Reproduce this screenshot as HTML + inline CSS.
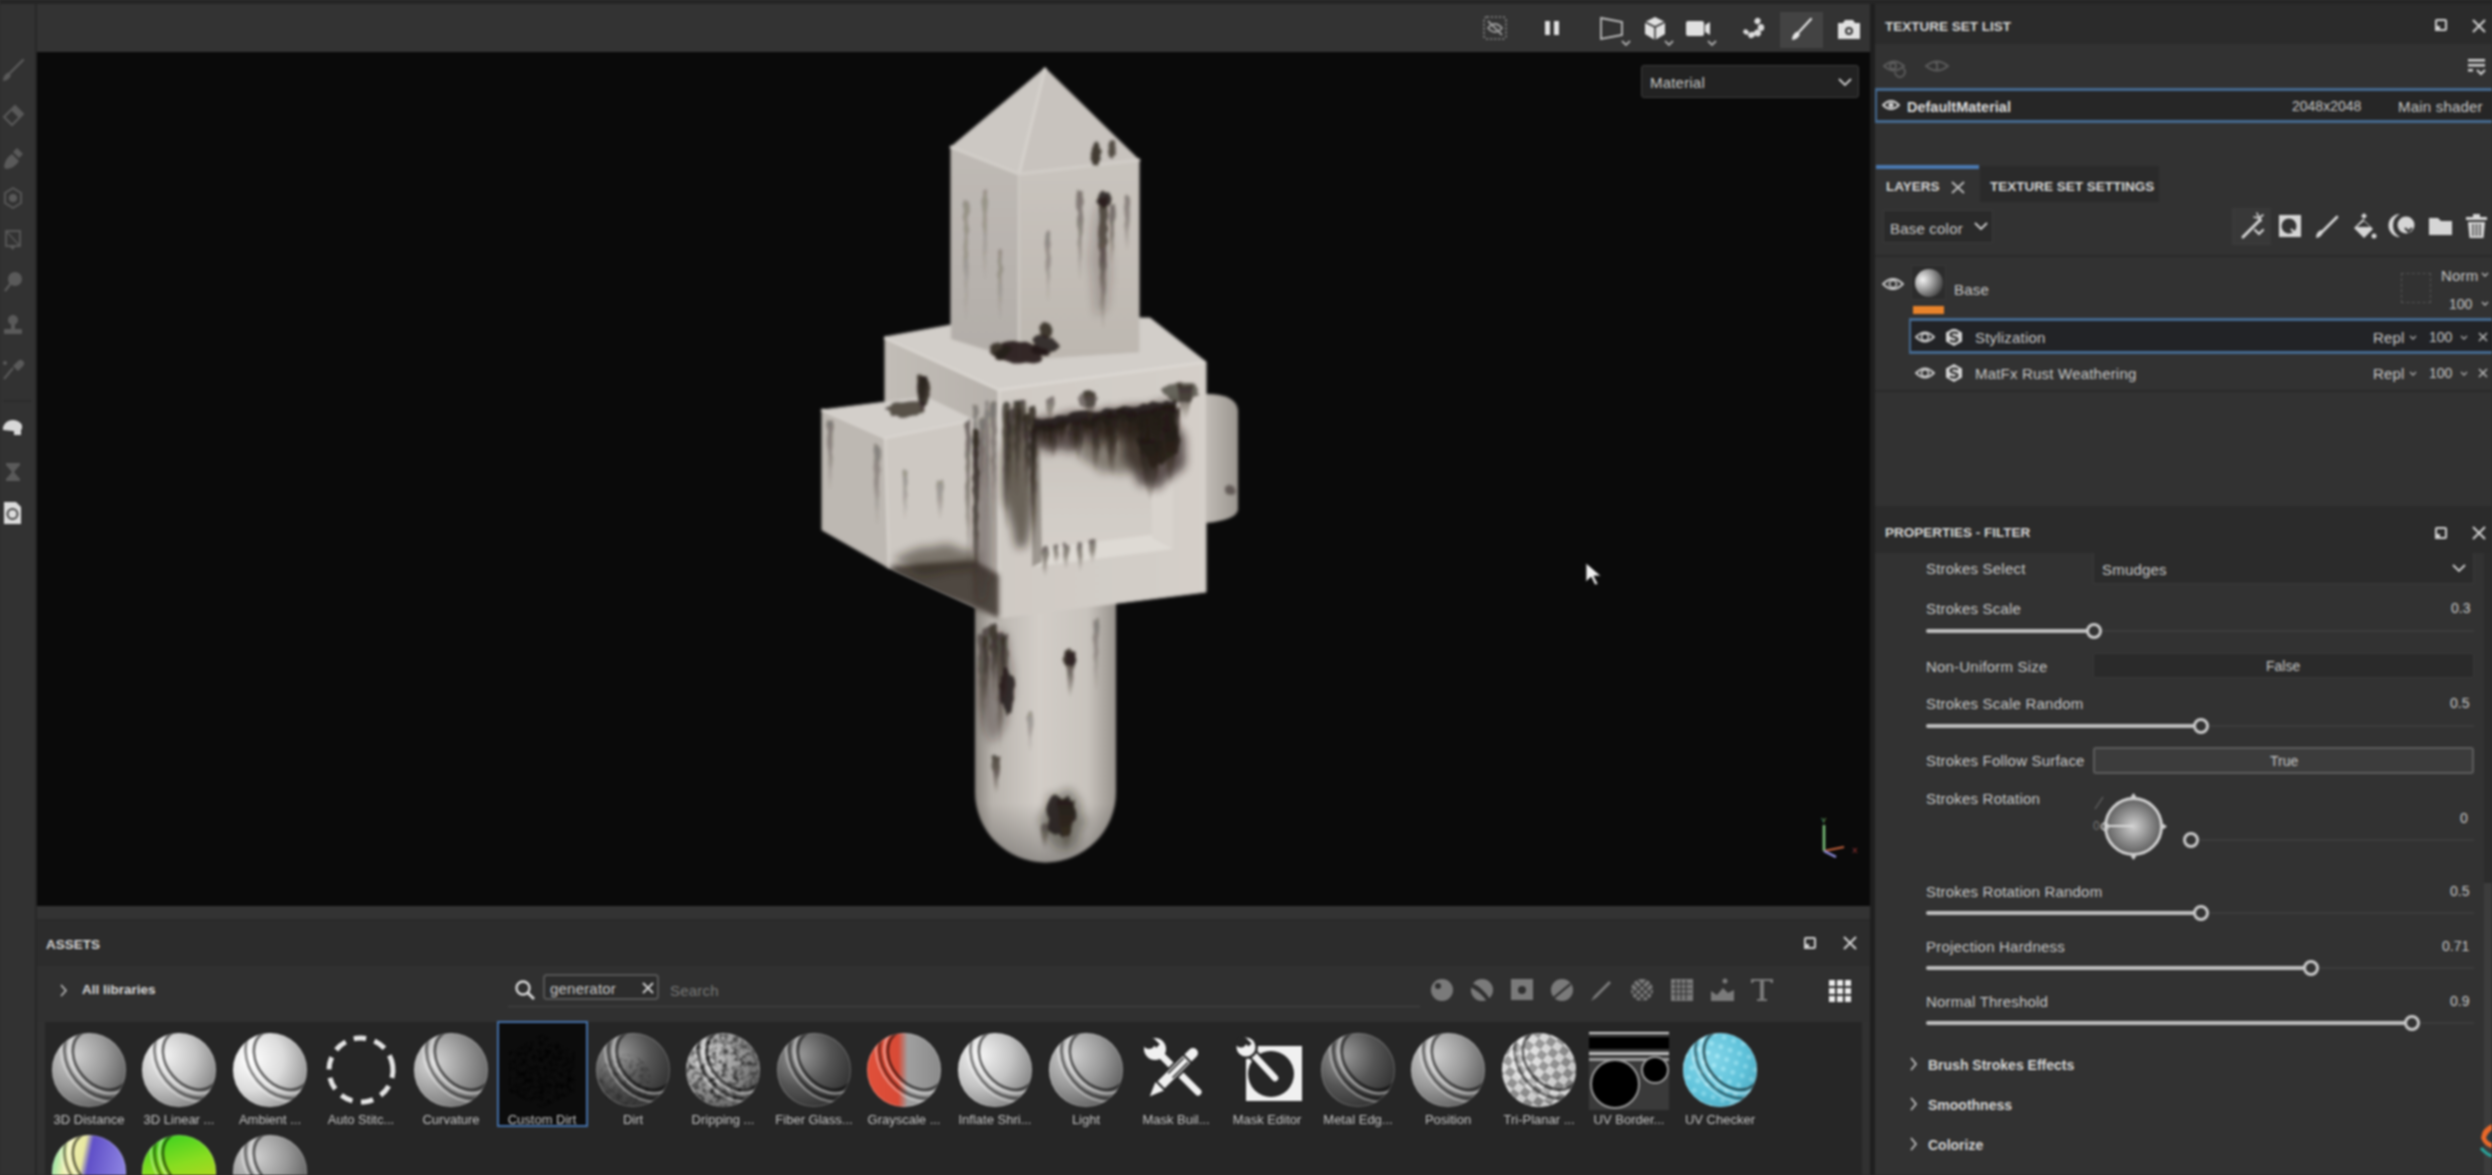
<!DOCTYPE html>
<html><head><meta charset="utf-8">
<style>
*{margin:0;padding:0;box-sizing:border-box}
html,body{width:2492px;height:1175px;overflow:hidden;background:#2e2e2e;font-family:"Liberation Sans",sans-serif;color:#d0d0d0}
.a{position:absolute}
.t{position:absolute;white-space:nowrap;line-height:1}
#topstrip{left:0;top:0;width:2492px;height:4px;background:#252525}
#lefttb{left:0;top:4px;width:35px;height:1171px;background:#323232}
#leftsep{left:35px;top:4px;width:2px;height:1171px;background:#272727}
#vptb{left:37px;top:4px;width:1833px;height:48px;background:#333333}
#vp{left:37px;top:52px;width:1833px;height:854px;background:#0a0a0a;overflow:hidden}
#midsep{left:1870px;top:4px;width:5px;height:1171px;background:#1f1f1f}
#rp{left:1875px;top:4px;width:617px;height:1171px;background:#323232}
#assets{left:37px;top:906px;width:1833px;height:269px;background:#313131}
.hdr{font-weight:bold;font-size:13.5px;color:#d6d6d6}
.lbl{font-size:15px;letter-spacing:0.2px;color:#c8c8c8}
.val{font-size:14px;color:#c8c8c8}
.trk{position:absolute;height:2px;background:#3c3c3c}
.fil{position:absolute;height:4px;background:#bdbdbd;border-radius:2px}
.knob{position:absolute;width:16px;height:16px;border:3px solid #c8c8c8;border-radius:50%;background:#333}
</style></head><body><div id="wrap" style="position:absolute;left:0;top:0;width:2492px;height:1175px;filter:blur(1px)">
<div class="a" id="topstrip"></div>
<div class="a" id="lefttb"></div>
<div class="a" id="leftsep"></div>
<div class="a" id="vptb"></div>
<div class="a" id="vp"></div>
<div class="a" id="assets"></div>
<div class="a" id="midsep"></div>
<div class="a" id="rp"></div>



<!-- 3D OBJECT -->
<svg class="a" style="left:0;top:0" width="1870" height="906">
<defs>
 <filter id="bl1" x="-20%" y="-20%" width="140%" height="140%"><feGaussianBlur stdDeviation="1"/></filter>
 <filter id="bl2" x="-50%" y="-50%" width="200%" height="200%"><feGaussianBlur stdDeviation="2.5"/></filter>
 <filter id="bl3" x="-50%" y="-50%" width="200%" height="200%"><feGaussianBlur stdDeviation="4"/></filter>
 <filter id="rust" x="-30%" y="-30%" width="160%" height="160%">
  <feTurbulence type="fractalNoise" baseFrequency="0.3 0.1" numOctaves="2" seed="4" result="n"/>
  <feDisplacementMap in="SourceGraphic" in2="n" scale="9" xChannelSelector="R" yChannelSelector="G" result="d"/>
  <feGaussianBlur in="d" stdDeviation="1.3"/>
 </filter>
 <filter id="rustb" x="-30%" y="-30%" width="160%" height="160%">
  <feTurbulence type="fractalNoise" baseFrequency="0.2 0.05" numOctaves="2" seed="11" result="n"/>
  <feDisplacementMap in="SourceGraphic" in2="n" scale="12" xChannelSelector="R" yChannelSelector="G" result="d"/>
  <feGaussianBlur in="d" stdDeviation="3.5"/>
 </filter>
 <linearGradient id="drip" x1="0" y1="0" x2="0" y2="1"><stop offset="0" stop-color="#1e1711" stop-opacity="1"/><stop offset="0.5" stop-color="#2e251d" stop-opacity="0.8"/><stop offset="1" stop-color="#4a3d31" stop-opacity="0.05"/></linearGradient>
 <linearGradient id="pl" x1="0" y1="0" x2="0" y2="1"><stop offset="0" stop-color="#bfbab5"/><stop offset="1" stop-color="#b2ada8"/></linearGradient>
 <linearGradient id="pr" x1="0" y1="0" x2="0" y2="1"><stop offset="0" stop-color="#c9c4be"/><stop offset="1" stop-color="#bdb7b0"/></linearGradient>
 <linearGradient id="cyl" x1="0" y1="0" x2="1" y2="0"><stop offset="0" stop-color="#8a857f"/><stop offset="0.12" stop-color="#b8b3ad"/><stop offset="0.45" stop-color="#d2cdc7"/><stop offset="0.8" stop-color="#c8c3bd"/><stop offset="1" stop-color="#96918b"/></linearGradient>
 <linearGradient id="cylb" x1="0" y1="0" x2="0" y2="1"><stop offset="0" stop-color="#000" stop-opacity="0"/><stop offset="0.78" stop-color="#000" stop-opacity="0"/><stop offset="1" stop-color="#000" stop-opacity="0.3"/></linearGradient>
 <linearGradient id="cfr" x1="0" y1="0" x2="1" y2="0"><stop offset="0" stop-color="#cfcac4"/><stop offset="1" stop-color="#d4cfc9"/></linearGradient>
 <linearGradient id="cfl" x1="0" y1="0" x2="1" y2="0"><stop offset="0" stop-color="#c2bdb7"/><stop offset="1" stop-color="#b6b1ab"/></linearGradient>
 <linearGradient id="rec" x1="0" y1="0" x2="0" y2="1"><stop offset="0" stop-color="#c4beb7"/><stop offset="0.6" stop-color="#d0cbc5"/><stop offset="1" stop-color="#d6d1cb"/></linearGradient>
 <linearGradient id="rcyl" x1="0" y1="0" x2="1" y2="0"><stop offset="0" stop-color="#c0bbb5"/><stop offset="1" stop-color="#9a958f"/></linearGradient>
 <clipPath id="objclip">
  <path d="M975 592 V792 A70.5 70.5 0 0 0 1116 792 V592 Z"/>
  <path d="M885 337 L990 318 L1150 318 L1206 362 L1206 592 L999 618 L885 566 Z"/>
  <path d="M1206 394 Q1236 394 1238 410 V510 Q1236 520 1206 523 Z"/>
  <path d="M822 410 L926 397 L974 420 L974 562 L889 568 L822 530 Z"/>
  <path d="M1045 68 L1139 160 L1139 352 L1019 360 L951 339 L951 147 Z"/>
 </clipPath>
</defs>
<g filter="url(#bl1)">
 <path d="M975 592 V792 A70.5 70.5 0 0 0 1116 792 V592 Z" fill="url(#cyl)"/>
 <path d="M975 592 V792 A70.5 70.5 0 0 0 1116 792 V592 Z" fill="url(#cylb)"/>
 <path d="M885 337 L999 390 L999 618 L885 566 Z" fill="url(#cfl)" stroke="#c0bbb5" stroke-width="1"/>
 <path d="M999 390 L1206 362 L1206 592 L999 618 Z" fill="url(#cfr)" stroke="#d0cbc5" stroke-width="1"/>
 <path d="M885 337 L990 318 L1150 318 L1206 362 L999 390 Z" fill="#d2cec9" stroke="#d2cec9" stroke-width="1"/>
 <path d="M999 390 L1206 362" stroke="#e0dcd7" stroke-width="2"/>
 <path d="M1032 417 L1173 398 L1173 549 L1032 567 Z" fill="url(#rec)"/>
 <path d="M1032 567 L1173 549 L1173 532 L1048 548 Z" fill="#dedad4"/>
 <path d="M1150 402 L1173 398 L1173 549 L1152 538 Z" fill="#d8d3cd"/>
 <path d="M1032 417 L1040 416 L1042 562 L1032 567 Z" fill="#9c968f"/>
 <path d="M1206 394 Q1236 394 1238 410 V510 Q1236 520 1206 523 Z" fill="url(#rcyl)"/>
 <path d="M822 410 L926 397 L974 420 L885 438 Z" fill="#d3cfca" stroke="#d3cfca" stroke-width="1"/>
 <path d="M822 410 L885 438 L889 568 L822 530 Z" fill="#bdb8b2" stroke="#bdb8b2" stroke-width="1"/>
 <path d="M885 438 L974 420 L974 562 L889 568 Z" fill="#cdc8c2" stroke="#cdc8c2" stroke-width="1"/>
 <path d="M951 147 L1019 174 L1019 360 L951 339 Z" fill="url(#pl)" stroke="#c4bfb9" stroke-width="1"/>
 <path d="M1019 174 L1139 160 L1139 352 L1019 360 Z" fill="url(#pr)" stroke="#c2bdb7" stroke-width="1"/>
 <path d="M1045 68 L951 147 L1019 174 Z" fill="#ccc8c3" stroke="#ccc8c3" stroke-width="1"/>
 <path d="M1045 68 L1019 174 L1139 160 Z" fill="#c8c3be" stroke="#c8c3be" stroke-width="1"/>
</g>
<g stroke-linecap="round" fill="none" filter="url(#bl1)">
 <path d="M1045 69L1019 174" stroke="#d9d5d0" stroke-width="2.5"/>
 <path d="M951 147L1019 174L1139 160" stroke="#d4d0cb" stroke-width="2.5"/>
 <path d="M1019 174V359" stroke="#cdc9c4" stroke-width="2"/>
 <path d="M999 391V616" stroke="#dad6d0" stroke-width="2.5"/>
 <path d="M885 338L999 390" stroke="#dedad5" stroke-width="2"/>
 <path d="M885 438L889 567" stroke="#d8d4ce" stroke-width="2"/>
 <path d="M822 410L885 438L974 420" stroke="#dcd8d3" stroke-width="2"/>
</g>
<g clip-path="url(#objclip)">
 <path d="M889 566 L974 560 L999 575 L999 618 L960 602 L905 585Z" fill="#3e362e" opacity="0.85" filter="url(#bl2)"/>
 <g filter="url(#bl3)">
<path d="M1034.0 419.8 L1038.7 420.4 L1043.5 415.8 L1048.2 416.7 L1052.9 418.6 L1057.7 417.2 L1062.4 414.1 L1067.1 413.5 L1071.9 412.3 L1076.6 411.7 L1081.3 412.7 L1086.1 415.1 L1090.8 409.8 L1095.5 411.8 L1100.3 414.1 L1105.0 408.2 L1109.7 407.7 L1114.5 410.0 L1119.2 409.8 L1123.9 406.0 L1128.7 406.7 L1133.4 407.3 L1138.1 405.4 L1142.9 406.8 L1147.6 407.7 L1152.3 403.3 L1157.1 404.7 L1161.8 400.6 L1166.5 401.4 L1171.3 403.5 L1176.0 398.2 L1176.0 437.3 L1171.3 433.1 L1166.5 433.9 L1161.8 430.4 L1157.1 437.6 L1152.3 433.6 L1147.6 438.8 L1142.9 443.9 L1138.1 430.5 L1133.4 437.9 L1128.7 437.6 L1123.9 444.2 L1119.2 433.4 L1114.5 435.7 L1109.7 438.6 L1105.0 440.8 L1100.3 449.3 L1095.5 437.1 L1090.8 450.1 L1086.1 437.3 L1081.3 443.7 L1076.6 448.6 L1071.9 451.2 L1067.1 453.2 L1062.4 446.8 L1057.7 450.8 L1052.9 450.5 L1048.2 454.3 L1043.5 448.4 L1038.7 445.5 L1034.0 453.9Z" fill="#2a2019" opacity="0.7"/>
<path d="M1164.1 450.0 L1163.7 455.5 L1157.1 459.9 L1152.9 464.6 L1146.2 468.3 L1140.5 473.6 L1129.1 472.1 L1120.0 474.2 L1111.1 471.6 L1100.4 472.6 L1095.8 466.9 L1089.6 463.5 L1084.1 459.6 L1076.8 455.5 L1081.4 450.0 L1079.8 444.9 L1084.7 440.6 L1089.4 436.4 L1094.0 431.9 L1098.5 425.2 L1109.5 424.5 L1120.0 421.0 L1129.8 426.1 L1141.8 424.8 L1148.6 430.1 L1152.2 435.7 L1161.9 438.8 L1170.0 443.7Z" fill="#2a2019" opacity="0.45"/>
<path d="M974.1 560.0 L973.4 562.7 L976.4 566.1 L969.9 568.4 L962.5 569.9 L953.9 570.1 L946.8 570.4 L940.0 572.8 L930.2 575.1 L919.1 575.2 L912.5 572.1 L911.6 567.9 L907.5 565.5 L899.6 563.2 L895.3 560.0 L897.1 556.6 L905.1 554.1 L909.0 551.3 L915.3 549.2 L922.1 547.0 L931.6 547.1 L940.0 544.5 L950.4 544.0 L957.1 547.6 L963.2 549.8 L973.7 550.6 L975.0 554.1 L983.6 556.5Z" fill="#2a2019" opacity="0.5"/>
<path d="M1185.1 450.0 L1186.0 459.0 L1184.5 468.0 L1177.5 472.7 L1172.1 477.2 L1166.5 480.3 L1161.7 486.9 L1155.0 490.2 L1148.9 484.0 L1141.0 486.8 L1136.0 480.1 L1133.2 472.0 L1129.5 465.6 L1122.3 459.4 L1122.7 450.0 L1123.5 440.9 L1123.5 430.8 L1126.4 421.1 L1132.8 414.7 L1141.1 413.4 L1147.9 410.7 L1155.0 406.3 L1162.8 406.9 L1169.4 412.2 L1173.8 420.1 L1177.6 427.2 L1183.5 432.6 L1185.6 441.2Z" fill="#2a2019" opacity="0.7"/>
<path d="M1030.8 470.0 L1032.5 485.4 L1033.1 503.9 L1031.5 520.1 L1029.2 535.3 L1025.9 546.9 L1021.7 546.5 L1018.0 550.3 L1014.5 540.8 L1012.2 526.6 L1009.5 519.5 L1007.5 509.1 L1003.4 502.7 L1002.0 487.1 L1002.1 470.0 L1002.4 453.4 L1005.6 442.0 L1006.6 427.6 L1008.2 412.8 L1011.6 407.5 L1014.9 407.3 L1018.0 404.8 L1021.0 407.7 L1024.6 406.2 L1026.4 420.8 L1027.7 433.9 L1029.6 444.0 L1032.4 454.6Z" fill="#2a2019" opacity="0.6"/>
<path d="M992.8 520.0 L992.6 541.8 L992.6 565.8 L990.2 578.7 L987.5 582.1 L986.1 596.0 L984.1 603.5 L982.0 599.2 L979.8 606.9 L977.9 596.8 L976.4 583.0 L975.0 570.3 L972.3 562.2 L973.3 537.9 L973.0 520.0 L973.4 502.3 L974.3 486.7 L974.9 469.1 L976.6 458.8 L977.4 434.0 L979.7 429.6 L982.0 423.3 L984.1 437.9 L986.2 442.4 L988.3 448.9 L990.7 457.8 L990.8 481.8 L991.5 500.4Z" fill="#2a2019" opacity="0.3"/>
<path d="M1012.7 680.0 L1013.0 694.1 L1009.3 703.7 L1007.6 714.6 L1005.8 726.6 L1002.0 730.0 L998.8 736.7 L995.0 739.3 L990.8 743.3 L987.3 734.8 L984.0 727.6 L982.4 714.6 L979.5 705.6 L979.7 692.0 L979.1 680.0 L980.1 668.3 L981.7 658.1 L984.4 650.8 L986.6 643.8 L988.5 633.7 L991.8 632.1 L995.0 635.4 L998.5 626.6 L1001.5 633.7 L1006.0 632.8 L1008.5 643.0 L1009.5 656.0 L1012.4 666.4Z" fill="#2a2019" opacity="0.35"/>
<path d="M1086.6 820.0 L1083.6 826.3 L1079.7 830.8 L1079.0 837.2 L1077.0 844.0 L1072.3 847.3 L1067.5 850.7 L1062.0 849.0 L1056.8 848.8 L1052.9 844.1 L1049.0 840.8 L1045.9 836.4 L1043.5 831.4 L1041.9 825.8 L1038.7 820.0 L1042.0 814.2 L1044.6 809.3 L1047.1 804.9 L1047.3 796.5 L1052.0 793.7 L1057.7 795.8 L1062.0 790.8 L1067.6 789.0 L1073.1 790.6 L1076.3 797.2 L1080.7 801.0 L1081.6 808.0 L1081.0 814.5Z" fill="#2a2019" opacity="0.4"/>
<path d="M1111.1 265.0 L1111.3 280.4 L1108.9 290.8 L1108.7 306.5 L1105.7 307.8 L1103.9 313.6 L1101.8 312.0 L1100.0 313.2 L1098.2 311.8 L1095.8 317.2 L1094.3 308.2 L1093.2 297.5 L1092.4 286.8 L1091.6 276.5 L1089.6 265.0 L1089.7 251.0 L1091.8 241.4 L1092.1 227.3 L1093.7 217.4 L1095.7 211.4 L1097.8 206.2 L1100.0 202.1 L1102.5 199.8 L1104.6 207.8 L1106.7 214.8 L1108.0 226.6 L1109.5 237.6 L1109.7 251.7Z" fill="#3a2e24" opacity="0.2"/>
 </g>
 <g filter="url(#bl1)">
<path d="M1034.0 418.7 L1038.7 419.2 L1043.5 419.4 L1048.2 418.5 L1052.9 418.3 L1057.7 415.5 L1062.4 415.6 L1067.1 415.9 L1071.9 412.2 L1076.6 411.6 L1081.3 410.7 L1086.1 410.5 L1090.8 411.9 L1095.5 412.6 L1100.3 411.9 L1105.0 408.4 L1109.7 408.8 L1114.5 409.3 L1119.2 407.8 L1123.9 405.9 L1128.7 406.8 L1133.4 407.6 L1138.1 406.8 L1142.9 403.6 L1147.6 404.2 L1152.3 401.2 L1157.1 402.5 L1161.8 403.2 L1166.5 400.6 L1171.3 402.1 L1176.0 399.9 L1176.0 409.9 L1171.3 418.5 L1166.5 413.1 L1161.8 417.5 L1157.1 417.8 L1152.3 413.5 L1147.6 418.5 L1142.9 421.7 L1138.1 416.7 L1133.4 421.4 L1128.7 423.9 L1123.9 415.8 L1119.2 418.8 L1114.5 420.5 L1109.7 418.9 L1105.0 426.8 L1100.3 418.4 L1095.5 426.2 L1090.8 429.1 L1086.1 426.9 L1081.3 423.2 L1076.6 421.9 L1071.9 423.0 L1067.1 423.9 L1062.4 430.7 L1057.7 427.9 L1052.9 431.3 L1048.2 432.0 L1043.5 430.6 L1038.7 429.2 L1034.0 432.2Z" fill="#221a14" opacity="0.85"/>
<path d="M1032.6 426.3 L1035.2 424.4 L1037.8 426.0 L1040.4 427.7 L1040.9 432.3 L1039.1 438.8 L1038.5 445.3 L1036.9 451.7 L1036.0 450.7 L1034.6 444.3 L1032.9 437.8 L1032.8 431.3Z" fill="url(#drip)" opacity="0.7156042909618883"/>
<path d="M1038.1 427.3 L1041.0 424.7 L1043.8 425.3 L1046.6 425.2 L1045.7 431.9 L1045.4 438.5 L1044.2 445.1 L1042.9 451.7 L1041.7 450.7 L1040.0 444.1 L1040.0 437.5 L1037.8 430.9Z" fill="url(#drip)" opacity="0.7064533574285852"/>
<path d="M1042.3 423.4 L1045.6 425.8 L1049.0 423.6 L1052.4 424.1 L1052.8 431.9 L1051.9 438.6 L1050.1 445.3 L1047.7 452.1 L1046.7 451.1 L1044.6 444.3 L1044.2 437.6 L1041.9 430.9Z" fill="url(#drip)" opacity="0.7942626145572826"/>
<path d="M1047.4 426.1 L1051.0 424.1 L1054.6 426.0 L1058.1 423.9 L1057.9 431.1 L1056.8 437.9 L1056.5 444.8 L1055.4 451.6 L1053.2 458.4 L1052.2 457.4 L1050.7 450.6 L1049.4 443.8 L1048.8 436.9 L1047.9 430.1Z" fill="url(#drip)" opacity="0.7436530323553936"/>
<path d="M1057.8 422.7 L1059.8 421.1 L1061.9 423.4 L1064.0 423.1 L1063.2 427.6 L1064.0 433.6 L1062.5 439.7 L1061.3 445.7 L1060.1 444.7 L1059.0 438.7 L1057.5 432.6 L1056.6 426.6Z" fill="url(#drip)" opacity="0.8671011522480617"/>
<path d="M1061.0 420.2 L1063.3 420.7 L1065.6 421.1 L1068.0 422.5 L1067.1 425.7 L1066.7 430.6 L1066.8 435.5 L1065.3 440.5 L1064.1 439.5 L1062.6 434.5 L1061.5 429.6 L1060.3 424.7Z" fill="url(#drip)" opacity="0.8495704998486742"/>
<path d="M1067.5 422.4 L1070.6 423.9 L1073.6 420.7 L1076.7 422.7 L1079.8 421.0 L1080.4 428.6 L1079.2 434.9 L1077.7 441.2 L1076.2 447.5 L1074.0 453.8 L1073.0 452.8 L1070.9 446.5 L1069.6 440.2 L1067.9 433.9 L1068.8 427.6Z" fill="url(#drip)" opacity="0.6782164939514159"/>
<path d="M1071.5 420.6 L1074.8 421.8 L1078.1 419.9 L1081.4 422.0 L1084.7 418.5 L1085.3 427.1 L1083.7 433.8 L1083.0 440.6 L1082.4 447.3 L1080.3 454.0 L1078.6 460.7 L1077.7 459.7 L1075.9 453.0 L1074.5 446.3 L1073.9 439.6 L1072.9 432.8 L1072.7 426.1Z" fill="url(#drip)" opacity="0.76490445077337"/>
<path d="M1081.3 416.5 L1083.5 420.3 L1085.7 416.9 L1087.9 418.8 L1087.0 424.2 L1088.1 430.2 L1086.5 436.1 L1085.0 442.0 L1084.2 441.0 L1083.2 435.1 L1082.8 429.2 L1080.6 423.2Z" fill="url(#drip)" opacity="0.6369957487847367"/>
<path d="M1084.3 420.5 L1087.9 420.8 L1091.4 420.5 L1094.9 418.6 L1095.1 425.3 L1093.3 431.2 L1091.8 437.1 L1089.9 442.9 L1089.1 441.9 L1086.8 436.1 L1085.0 430.2 L1084.7 424.3Z" fill="url(#drip)" opacity="0.8103326849479464"/>
<path d="M1090.5 418.6 L1093.9 418.2 L1097.4 415.8 L1100.8 418.1 L1100.5 422.8 L1101.7 429.0 L1099.2 435.1 L1099.3 441.3 L1099.9 447.5 L1098.9 453.6 L1098.3 459.8 L1097.1 465.9 L1096.0 472.1 L1095.3 471.1 L1093.6 464.9 L1092.9 458.8 L1092.6 452.6 L1092.7 446.5 L1092.0 440.3 L1092.3 434.1 L1091.4 428.0 L1090.1 421.8Z" fill="url(#drip)" opacity="0.7589393771186163"/>
<path d="M1096.8 416.1 L1100.2 415.4 L1103.6 414.3 L1107.1 414.4 L1110.5 413.8 L1109.1 422.0 L1109.0 428.4 L1108.5 434.9 L1106.9 441.4 L1104.3 447.8 L1103.1 446.8 L1100.8 440.4 L1099.9 433.9 L1098.7 427.4 L1098.4 421.0Z" fill="url(#drip)" opacity="0.8643564402651348"/>
<path d="M1105.7 416.7 L1108.2 415.5 L1110.6 415.7 L1113.1 416.5 L1112.5 423.2 L1113.4 429.5 L1112.4 435.7 L1113.4 442.0 L1112.4 448.3 L1111.7 454.6 L1111.2 460.9 L1110.7 467.2 L1109.8 473.5 L1109.1 472.5 L1108.4 466.2 L1107.7 459.9 L1107.3 453.6 L1106.1 447.3 L1106.4 441.0 L1105.3 434.7 L1105.3 428.5 L1105.6 422.2Z" fill="url(#drip)" opacity="0.7414746494230962"/>
<path d="M1107.7 412.4 L1111.0 412.1 L1114.3 415.5 L1117.6 414.2 L1118.4 420.1 L1117.6 426.4 L1116.3 432.6 L1117.7 438.9 L1116.3 445.2 L1116.5 451.5 L1114.9 457.8 L1114.6 464.1 L1114.3 470.4 L1113.1 476.6 L1112.3 475.6 L1110.9 469.4 L1110.0 463.1 L1109.5 456.8 L1109.1 450.5 L1109.8 444.2 L1109.4 437.9 L1108.6 431.6 L1107.7 425.4 L1106.2 419.1Z" fill="url(#drip)" opacity="0.8669045116153069"/>
<path d="M1116.6 410.7 L1119.7 410.2 L1122.9 413.6 L1126.1 410.0 L1126.7 418.5 L1124.7 425.0 L1124.5 431.5 L1123.7 438.0 L1123.2 444.5 L1122.2 451.0 L1120.9 450.0 L1119.4 443.5 L1118.0 437.0 L1117.2 430.5 L1116.7 424.0 L1117.3 417.5Z" fill="url(#drip)" opacity="0.8587456685830712"/>
<path d="M1120.8 408.8 L1124.2 409.6 L1127.7 412.1 L1131.1 409.6 L1134.5 411.4 L1133.4 416.9 L1134.0 423.4 L1132.2 429.8 L1132.2 436.2 L1131.4 442.7 L1130.4 449.1 L1128.2 455.6 L1127.4 454.6 L1125.2 448.1 L1124.8 441.7 L1124.0 435.2 L1123.4 428.8 L1120.7 422.4 L1120.3 415.9Z" fill="url(#drip)" opacity="0.645281142236513"/>
<path d="M1126.7 413.0 L1129.7 413.3 L1132.8 413.0 L1135.8 413.9 L1138.9 416.7 L1139.2 421.9 L1138.8 428.8 L1137.9 435.8 L1136.0 442.7 L1135.3 449.6 L1133.5 456.5 L1132.3 455.5 L1130.0 448.6 L1129.9 441.7 L1127.8 434.8 L1127.5 427.8 L1127.3 420.9Z" fill="url(#drip)" opacity="0.7430884421032941"/>
<path d="M1134.8 412.0 L1137.6 415.3 L1140.4 413.0 L1143.2 413.4 L1142.8 420.1 L1143.4 426.4 L1141.8 432.7 L1141.3 439.0 L1140.8 445.3 L1140.3 451.5 L1139.7 457.8 L1138.7 456.8 L1136.8 450.5 L1136.6 444.3 L1135.8 438.0 L1135.2 431.7 L1134.7 425.4 L1133.6 419.1Z" fill="url(#drip)" opacity="0.8182814603361526"/>
<path d="M1140.2 410.7 L1142.5 411.7 L1144.9 411.0 L1147.2 410.7 L1146.6 416.3 L1146.0 422.9 L1146.9 429.4 L1145.6 435.9 L1144.4 442.5 L1142.9 441.5 L1142.3 434.9 L1141.3 428.4 L1139.8 421.9 L1139.3 415.3Z" fill="url(#drip)" opacity="0.8783985028736239"/>
<path d="M1148.5 410.2 L1150.8 410.7 L1153.0 409.4 L1155.2 409.5 L1155.3 417.6 L1154.6 424.5 L1153.7 431.3 L1153.2 438.1 L1152.4 444.9 L1151.0 443.9 L1149.7 437.1 L1149.5 430.3 L1148.0 423.5 L1149.0 416.6Z" fill="url(#drip)" opacity="0.8251232062869309"/>
<path d="M1153.4 410.3 L1155.9 408.9 L1158.3 412.1 L1160.7 408.8 L1162.5 416.7 L1161.4 422.8 L1161.8 428.8 L1159.5 434.9 L1161.0 441.0 L1160.8 447.0 L1160.1 453.1 L1159.5 459.2 L1159.2 465.2 L1158.7 471.3 L1158.6 477.4 L1157.7 483.4 L1156.5 482.4 L1155.8 476.4 L1155.6 470.3 L1155.2 464.2 L1155.4 458.2 L1154.9 452.1 L1153.9 446.0 L1154.4 440.0 L1153.1 433.9 L1153.4 427.8 L1153.3 421.8 L1153.7 415.7Z" fill="url(#drip)" opacity="0.7265436879415117"/>
<path d="M1154.8 407.1 L1158.5 408.4 L1162.1 406.5 L1165.8 405.7 L1166.0 413.2 L1164.8 419.6 L1164.1 425.9 L1163.0 432.3 L1162.6 438.7 L1160.8 445.1 L1160.0 444.1 L1158.1 437.7 L1157.4 431.3 L1157.1 424.9 L1156.6 418.6 L1153.6 412.2Z" fill="url(#drip)" opacity="0.6511474203163011"/>
<path d="M1163.6 406.2 L1166.6 405.6 L1169.7 405.1 L1172.8 405.8 L1175.9 405.1 L1176.5 411.4 L1176.2 417.4 L1174.2 423.5 L1175.3 429.5 L1174.9 435.6 L1174.8 441.6 L1173.7 447.7 L1173.2 453.8 L1172.2 459.8 L1171.8 465.9 L1171.7 471.9 L1170.0 478.0 L1169.4 477.0 L1167.7 470.9 L1167.2 464.9 L1166.9 458.8 L1165.6 452.8 L1165.7 446.7 L1165.9 440.6 L1164.7 434.6 L1163.8 428.5 L1163.0 422.5 L1164.9 416.4 L1162.2 410.4Z" fill="url(#drip)" opacity="0.6769446394435816"/>
<path d="M1169.4 406.7 L1172.9 406.8 L1176.4 409.5 L1179.9 406.7 L1179.9 413.9 L1179.3 420.0 L1179.4 426.1 L1178.8 432.2 L1177.8 438.3 L1176.7 444.3 L1175.3 450.4 L1173.8 449.4 L1172.8 443.3 L1171.8 437.3 L1171.6 431.2 L1170.3 425.1 L1169.1 419.0 L1169.1 412.9Z" fill="url(#drip)" opacity="0.8058110931336083"/>
<path d="M1180.3 440.0 L1178.6 446.6 L1177.6 453.2 L1171.9 455.5 L1168.6 458.5 L1165.3 461.2 L1162.1 465.0 L1158.0 463.1 L1153.2 469.2 L1149.5 464.6 L1147.9 457.8 L1145.3 454.2 L1141.6 451.0 L1138.6 446.2 L1135.9 440.0 L1140.3 434.3 L1137.8 426.4 L1139.5 419.3 L1144.3 416.0 L1148.5 412.2 L1153.6 413.2 L1158.0 415.7 L1161.4 419.2 L1167.0 413.7 L1172.4 414.6 L1174.6 421.5 L1177.2 427.1 L1178.0 433.6Z" fill="#221a14" opacity="0.8"/>
<path d="M1139.0 440.8 L1142.1 438.4 L1145.3 441.0 L1148.4 438.7 L1151.6 440.4 L1154.7 440.5 L1157.9 441.4 L1161.0 440.5 L1159.9 446.0 L1160.8 452.0 L1158.9 458.0 L1158.4 464.0 L1157.9 470.0 L1157.1 476.0 L1154.8 482.0 L1154.1 488.0 L1152.6 494.0 L1150.8 500.0 L1149.3 499.0 L1147.5 493.0 L1146.2 487.0 L1144.6 481.0 L1144.0 475.0 L1143.0 469.0 L1140.9 463.0 L1140.4 457.0 L1139.1 451.0 L1140.1 445.0Z" fill="url(#drip)" opacity="0.8"/>
<path d="M1163.0 429.6 L1166.5 429.2 L1170.0 430.9 L1173.5 431.9 L1177.0 428.6 L1177.6 436.1 L1175.8 442.2 L1176.5 448.3 L1175.7 454.4 L1175.0 460.6 L1174.0 466.7 L1172.6 472.8 L1172.4 478.9 L1170.4 485.0 L1169.4 484.0 L1168.3 477.9 L1166.7 471.8 L1166.1 465.7 L1165.7 459.6 L1165.0 453.4 L1163.7 447.3 L1163.3 441.2 L1164.0 435.1Z" fill="url(#drip)" opacity="0.75"/>
<path d="M1003.1 404.2 L1005.3 401.7 L1007.6 401.8 L1009.8 404.1 L1009.6 408.7 L1009.1 414.8 L1009.1 420.9 L1010.9 427.0 L1010.6 433.1 L1009.0 439.2 L1010.1 445.3 L1008.8 451.4 L1009.5 457.5 L1008.3 463.6 L1009.2 469.7 L1009.3 475.8 L1008.7 481.9 L1008.8 488.0 L1007.9 494.2 L1008.2 500.3 L1008.4 506.4 L1007.8 512.5 L1007.9 518.6 L1007.5 524.7 L1007.2 530.8 L1006.0 529.8 L1005.3 523.7 L1005.4 517.6 L1005.3 511.5 L1004.7 505.4 L1004.9 499.3 L1004.3 493.2 L1004.4 487.0 L1003.9 480.9 L1003.9 474.8 L1003.5 468.7 L1004.4 462.6 L1003.8 456.5 L1003.7 450.4 L1003.4 444.3 L1003.1 438.2 L1002.3 432.1 L1003.3 426.0 L1002.7 419.9 L1002.3 413.8 L1002.6 407.7Z" fill="url(#drip)" opacity="0.7105441962026477"/>
<path d="M1006.7 411.6 L1009.1 410.2 L1011.4 409.0 L1013.8 408.1 L1014.5 416.1 L1013.3 422.5 L1014.9 428.9 L1014.2 435.2 L1013.0 441.6 L1013.1 448.0 L1012.3 454.4 L1012.4 460.8 L1012.7 467.1 L1012.8 473.5 L1012.0 479.9 L1012.2 486.3 L1011.2 492.7 L1010.6 499.0 L1009.9 498.0 L1009.0 491.7 L1008.5 485.3 L1008.4 478.9 L1008.3 472.5 L1007.5 466.1 L1007.0 459.8 L1007.6 453.4 L1007.6 447.0 L1007.2 440.6 L1006.1 434.2 L1007.5 427.9 L1006.3 421.5 L1006.4 415.1Z" fill="url(#drip)" opacity="0.5565112002227539"/>
<path d="M1013.8 400.9 L1015.8 401.0 L1017.8 400.9 L1019.8 402.2 L1019.7 408.3 L1021.2 414.5 L1020.9 420.8 L1020.3 427.0 L1019.4 433.3 L1020.1 439.6 L1019.4 445.8 L1019.6 452.1 L1019.7 458.3 L1018.2 464.6 L1018.9 470.9 L1018.8 477.1 L1018.0 483.4 L1017.7 489.6 L1017.1 495.9 L1016.4 494.9 L1015.5 488.6 L1015.0 482.4 L1014.8 476.1 L1015.0 469.9 L1015.0 463.6 L1015.2 457.3 L1014.7 451.1 L1013.5 444.8 L1015.0 438.6 L1014.7 432.3 L1014.5 426.0 L1014.6 419.8 L1014.4 413.5 L1013.8 407.3Z" fill="url(#drip)" opacity="0.7234582195755985"/>
<path d="M1017.6 400.6 L1020.2 400.4 L1022.9 399.7 L1025.5 400.4 L1025.3 406.4 L1025.9 412.4 L1024.2 418.4 L1024.6 424.5 L1024.9 430.5 L1024.2 436.6 L1023.2 442.6 L1023.4 448.6 L1023.3 454.7 L1022.1 460.7 L1021.1 459.7 L1020.0 453.7 L1020.2 447.6 L1019.3 441.6 L1019.3 435.6 L1018.7 429.5 L1018.8 423.5 L1017.6 417.4 L1018.6 411.4 L1018.6 405.4Z" fill="url(#drip)" opacity="0.6489271959386389"/>
<path d="M1024.1 414.9 L1025.9 414.0 L1027.7 413.9 L1029.5 411.7 L1030.2 419.8 L1028.7 426.1 L1029.8 432.3 L1028.9 438.5 L1029.6 444.7 L1028.6 450.9 L1028.8 457.2 L1029.3 463.4 L1028.8 469.6 L1028.1 475.8 L1028.9 482.0 L1027.6 488.3 L1027.8 494.5 L1027.5 500.7 L1026.2 499.7 L1025.9 493.5 L1025.9 487.3 L1024.8 481.0 L1025.1 474.8 L1024.5 468.6 L1024.9 462.4 L1024.5 456.2 L1024.6 449.9 L1024.8 443.7 L1024.0 437.5 L1023.7 431.3 L1023.9 425.1 L1022.7 418.8Z" fill="url(#drip)" opacity="0.8123601814911174"/>
<path d="M1028.8 407.8 L1030.8 406.7 L1032.8 406.0 L1034.8 405.6 L1036.1 411.9 L1035.6 418.0 L1033.8 424.0 L1035.2 430.1 L1035.3 436.1 L1034.5 442.2 L1035.4 448.3 L1035.1 454.3 L1035.2 460.4 L1033.9 466.4 L1034.5 472.5 L1034.2 478.6 L1033.7 484.6 L1033.5 490.7 L1033.1 496.7 L1033.9 502.8 L1033.1 508.8 L1033.0 514.9 L1032.8 521.0 L1032.8 527.0 L1032.4 533.1 L1031.4 532.1 L1030.6 526.0 L1030.5 520.0 L1030.8 513.9 L1030.6 507.8 L1029.6 501.8 L1029.9 495.7 L1030.5 489.7 L1030.4 483.6 L1029.3 477.6 L1029.9 471.5 L1029.0 465.4 L1028.3 459.4 L1029.9 453.3 L1028.1 447.3 L1030.0 441.2 L1028.6 435.1 L1029.5 429.1 L1028.5 423.0 L1029.5 417.0 L1029.0 410.9Z" fill="url(#drip)" opacity="0.7916844491754219"/>
<path d="M1097.0 400.0 L1095.9 401.6 L1095.3 403.1 L1095.3 405.2 L1093.3 406.0 L1091.5 406.5 L1089.9 407.6 L1088.0 407.2 L1086.1 407.4 L1083.8 407.8 L1082.4 406.3 L1079.9 405.8 L1079.5 403.7 L1078.9 401.9 L1078.6 400.0 L1077.5 397.8 L1079.9 396.5 L1079.8 394.1 L1082.4 393.7 L1083.3 391.2 L1085.6 390.7 L1088.0 390.0 L1090.4 390.7 L1092.7 391.2 L1094.8 392.3 L1095.4 394.7 L1095.9 396.6 L1098.4 397.9Z" fill="#221a14" opacity="0.5"/>
<path d="M1084.0 390.9 L1087.0 391.0 L1090.0 390.2 L1093.0 392.9 L1096.0 393.2 L1094.6 398.0 L1095.5 404.0 L1093.2 410.0 L1092.5 416.0 L1090.6 422.0 L1089.3 421.0 L1087.3 415.0 L1086.2 409.0 L1085.8 403.0 L1083.6 397.0Z" fill="url(#drip)" opacity="0.6"/>
<path d="M1196.6 392.0 L1199.4 394.5 L1195.9 396.3 L1192.3 397.4 L1192.0 400.3 L1189.1 402.5 L1184.0 401.7 L1180.0 402.1 L1175.5 402.9 L1172.2 401.0 L1169.3 399.5 L1168.3 397.2 L1167.0 395.5 L1163.6 394.1 L1162.6 392.0 L1160.8 389.6 L1163.3 387.5 L1166.7 386.1 L1169.4 384.6 L1173.3 384.2 L1176.3 383.0 L1180.0 381.8 L1183.7 383.1 L1187.7 383.1 L1192.8 383.1 L1195.9 385.0 L1196.4 387.6 L1198.4 389.7Z" fill="#221a14" opacity="0.6"/>
<path d="M1177.0 383.4 L1180.2 383.4 L1183.4 386.2 L1186.6 385.8 L1189.8 385.5 L1193.0 385.2 L1192.1 392.0 L1191.9 399.0 L1189.8 406.0 L1188.5 413.0 L1185.7 420.0 L1184.3 419.0 L1182.1 412.0 L1180.0 405.0 L1179.0 398.0 L1178.4 391.0Z" fill="url(#drip)" opacity="0.6"/>
<path d="M1046.0 399.8 L1048.7 398.5 L1051.3 396.8 L1054.0 396.6 L1054.7 404.2 L1052.7 410.5 L1051.7 416.8 L1050.6 423.0 L1049.4 422.0 L1048.2 415.8 L1046.4 409.5 L1046.2 403.2Z" fill="url(#drip)" opacity="0.5"/>
<path d="M1031.0 431.8 L1033.0 428.7 L1035.0 429.6 L1037.0 429.6 L1036.4 436.0 L1036.4 442.0 L1036.8 448.0 L1037.3 454.0 L1036.2 460.0 L1037.2 466.0 L1036.5 472.0 L1036.3 478.0 L1037.2 484.0 L1036.9 490.0 L1036.2 496.0 L1035.8 502.0 L1036.1 508.0 L1036.1 514.0 L1036.0 520.0 L1035.7 526.0 L1034.9 532.0 L1034.9 538.0 L1035.3 544.0 L1034.6 550.0 L1033.4 549.0 L1032.8 543.0 L1033.0 537.0 L1032.9 531.0 L1032.2 525.0 L1032.0 519.0 L1031.5 513.0 L1031.7 507.0 L1031.8 501.0 L1031.6 495.0 L1030.7 489.0 L1030.7 483.0 L1030.8 477.0 L1031.9 471.0 L1032.1 465.0 L1031.8 459.0 L1030.8 453.0 L1030.4 447.0 L1031.7 441.0 L1031.2 435.0Z" fill="url(#drip)" opacity="0.6"/>
<path d="M1042.0 548.3 L1044.0 546.7 L1046.0 545.6 L1048.0 547.5 L1049.1 554.0 L1046.9 561.5 L1046.6 569.0 L1045.8 576.5 L1044.6 575.5 L1042.7 568.0 L1043.1 560.5 L1041.4 553.0Z" fill="url(#drip)" opacity="0.55"/>
<path d="M1053.8 545.0 L1055.3 545.0 L1056.7 543.9 L1058.2 546.0 L1057.6 549.8 L1058.7 554.6 L1058.0 559.3 L1056.5 564.0 L1055.1 563.0 L1054.1 558.3 L1054.1 553.6 L1053.3 548.8Z" fill="url(#drip)" opacity="0.55"/>
<path d="M1062.8 542.9 L1064.9 542.5 L1067.1 545.8 L1069.2 544.9 L1069.6 550.1 L1068.0 556.3 L1067.7 562.6 L1066.8 568.8 L1065.5 567.8 L1063.9 561.6 L1063.2 555.3 L1063.6 549.1Z" fill="url(#drip)" opacity="0.55"/>
<path d="M1077.9 542.8 L1079.3 542.1 L1080.7 542.2 L1082.1 543.7 L1081.9 549.3 L1082.3 556.5 L1081.7 563.8 L1080.7 571.0 L1079.1 570.0 L1078.8 562.8 L1077.9 555.5 L1076.8 548.3Z" fill="url(#drip)" opacity="0.55"/>
<path d="M1088.6 540.3 L1090.9 539.7 L1093.1 538.9 L1095.4 539.6 L1095.6 546.1 L1094.9 551.7 L1094.2 557.3 L1092.4 563.0 L1091.3 562.0 L1090.5 556.3 L1089.4 550.7 L1089.2 545.1Z" fill="url(#drip)" opacity="0.55"/>
<path d="M1047.6 352.0 L1046.4 354.4 L1040.7 355.9 L1042.5 359.1 L1040.2 361.9 L1034.0 363.4 L1026.1 362.5 L1020.0 363.4 L1013.3 363.6 L1008.3 361.6 L1003.6 360.1 L995.8 359.6 L995.5 356.6 L992.1 354.5 L996.1 352.0 L999.3 350.1 L1001.8 348.6 L1002.7 346.6 L1001.7 343.0 L1007.2 341.6 L1013.6 341.1 L1020.0 342.3 L1026.0 341.7 L1030.4 343.6 L1033.5 345.3 L1038.1 346.3 L1040.9 348.0 L1047.7 349.5Z" fill="#221a14" opacity="0.9"/>
<path d="M1059.3 345.0 L1059.5 347.4 L1057.0 349.1 L1055.3 350.9 L1052.3 351.5 L1050.1 352.6 L1048.4 355.7 L1045.0 356.1 L1041.9 354.7 L1038.7 354.4 L1034.8 354.1 L1032.0 352.4 L1031.1 349.8 L1032.3 347.1 L1033.7 345.0 L1034.7 343.3 L1032.5 340.7 L1033.0 338.2 L1035.3 336.3 L1038.1 334.8 L1042.1 335.8 L1045.0 335.0 L1047.6 336.9 L1049.6 338.2 L1053.0 337.8 L1053.6 340.1 L1055.9 341.3 L1057.0 343.0Z" fill="#221a14" opacity="0.85"/>
<path d="M1011.5 350.0 L1009.9 351.8 L1008.0 353.1 L1007.9 355.1 L1005.4 355.4 L1004.9 358.1 L1002.7 359.6 L1000.0 360.5 L997.3 359.4 L995.8 357.0 L994.6 355.4 L992.0 355.1 L991.1 353.4 L989.5 351.9 L990.8 350.0 L990.4 348.2 L989.8 346.1 L992.3 345.1 L993.0 343.0 L996.0 343.4 L997.7 342.0 L1000.0 343.4 L1001.8 343.7 L1003.2 344.7 L1004.7 345.3 L1006.9 345.6 L1009.6 346.3 L1011.3 347.9Z" fill="#221a14" opacity="0.8"/>
<path d="M1052.7 330.0 L1051.8 331.8 L1052.1 333.9 L1050.9 335.2 L1050.0 336.7 L1048.9 337.9 L1047.3 337.7 L1046.0 337.4 L1044.7 337.4 L1043.6 336.7 L1042.1 336.4 L1040.7 335.6 L1040.0 333.9 L1040.6 331.6 L1039.7 330.0 L1039.5 328.0 L1039.5 325.8 L1041.3 325.0 L1041.8 322.9 L1043.3 322.5 L1044.6 321.9 L1046.0 322.6 L1047.2 323.1 L1048.4 323.4 L1049.7 323.9 L1050.3 325.4 L1051.3 326.6 L1051.6 328.3Z" fill="#221a14" opacity="0.8"/>
<path d="M1098.5 196.9 L1101.5 198.6 L1104.5 197.3 L1107.5 196.1 L1107.2 204.2 L1107.6 210.4 L1108.0 216.6 L1106.4 222.8 L1108.3 229.0 L1106.2 235.1 L1108.0 241.3 L1105.8 247.5 L1106.3 253.7 L1106.2 259.9 L1106.6 266.1 L1105.4 272.3 L1105.4 278.5 L1106.1 284.7 L1106.0 290.9 L1104.7 297.0 L1104.6 303.2 L1104.6 309.4 L1104.4 315.6 L1104.3 321.8 L1103.9 328.0 L1102.5 327.0 L1101.7 320.8 L1101.3 314.6 L1100.8 308.4 L1100.5 302.2 L1101.2 296.0 L1101.0 289.9 L1100.1 283.7 L1099.7 277.5 L1100.5 271.3 L1099.3 265.1 L1099.4 258.9 L1100.1 252.7 L1098.2 246.5 L1098.7 240.3 L1098.1 234.1 L1098.6 228.0 L1099.6 221.8 L1099.6 215.6 L1098.9 209.4 L1099.1 203.2Z" fill="url(#drip)" opacity="0.7"/>
<path d="M1077.5 189.5 L1079.2 191.0 L1080.8 190.9 L1082.5 191.6 L1082.6 196.0 L1083.8 202.0 L1082.0 208.0 L1082.8 214.0 L1083.5 220.0 L1082.8 226.0 L1082.7 232.0 L1081.5 238.0 L1081.7 244.0 L1081.8 250.0 L1082.0 256.0 L1081.1 262.0 L1081.2 268.0 L1081.2 274.0 L1080.7 280.0 L1079.3 279.0 L1078.7 273.0 L1078.7 267.0 L1078.3 261.0 L1078.5 255.0 L1078.3 249.0 L1077.4 243.0 L1078.7 237.0 L1078.6 231.0 L1077.0 225.0 L1077.0 219.0 L1078.5 213.0 L1076.1 207.0 L1076.2 201.0 L1076.6 195.0Z" fill="url(#drip)" opacity="0.45"/>
<path d="M1124.5 197.4 L1126.2 194.2 L1127.8 196.1 L1129.5 197.0 L1130.2 202.1 L1129.6 208.2 L1129.8 214.3 L1129.7 220.4 L1129.0 226.6 L1128.4 232.7 L1128.6 238.8 L1128.4 244.9 L1127.4 251.0 L1126.5 250.0 L1125.8 243.9 L1125.1 237.8 L1125.0 231.7 L1124.3 225.6 L1125.4 219.4 L1124.6 213.3 L1124.1 207.2 L1125.1 201.1Z" fill="url(#drip)" opacity="0.4"/>
<path d="M1046.0 233.3 L1047.3 231.6 L1048.7 230.1 L1050.0 232.4 L1049.7 238.4 L1050.6 244.7 L1049.3 251.1 L1050.7 257.5 L1050.6 263.8 L1049.2 270.2 L1050.1 276.5 L1048.9 282.9 L1048.8 289.3 L1049.0 295.6 L1048.4 302.0 L1047.3 301.0 L1046.9 294.6 L1047.1 288.3 L1046.9 281.9 L1047.0 275.5 L1045.8 269.2 L1045.6 262.8 L1046.6 256.5 L1045.6 250.1 L1044.7 243.7 L1045.5 237.4Z" fill="url(#drip)" opacity="0.35"/>
<path d="M1109.5 204.0 L1111.2 205.5 L1112.8 204.6 L1114.5 203.6 L1115.6 211.0 L1115.7 217.0 L1113.8 223.0 L1113.8 229.0 L1114.1 235.0 L1113.4 241.0 L1114.3 247.0 L1113.3 253.0 L1112.7 259.0 L1112.4 265.0 L1111.2 264.0 L1110.7 258.0 L1110.7 252.0 L1110.8 246.0 L1109.9 240.0 L1110.0 234.0 L1110.6 228.0 L1109.4 222.0 L1109.0 216.0 L1110.1 210.0Z" fill="url(#drip)" opacity="0.5"/>
<path d="M1111.4 200.0 L1110.8 201.8 L1110.9 203.8 L1109.3 204.8 L1107.8 205.4 L1106.6 206.1 L1105.4 206.8 L1104.0 208.4 L1102.5 207.4 L1101.4 206.1 L1100.5 205.0 L1098.6 205.0 L1097.7 203.5 L1096.3 202.0 L1096.9 200.0 L1097.8 198.4 L1098.6 197.0 L1098.5 195.0 L1099.6 193.7 L1100.6 192.0 L1102.2 190.7 L1104.0 191.3 L1105.4 192.8 L1107.2 192.3 L1109.0 192.8 L1110.0 194.5 L1110.7 196.3 L1111.6 198.0Z" fill="#221a14" opacity="0.85"/>
<path d="M1100.7 154.0 L1099.8 155.7 L1100.8 158.7 L1100.0 160.4 L1099.0 161.4 L1098.4 164.2 L1097.4 166.0 L1096.0 164.9 L1094.7 165.1 L1093.2 165.4 L1092.4 162.9 L1091.8 160.7 L1090.5 159.3 L1091.3 156.1 L1090.7 154.0 L1091.6 152.0 L1092.0 150.2 L1091.9 147.4 L1093.3 147.3 L1093.6 144.1 L1094.7 142.9 L1096.0 141.6 L1097.4 141.7 L1098.5 143.5 L1099.3 145.8 L1099.4 148.6 L1100.9 149.2 L1101.7 151.4Z" fill="#221a14" opacity="0.8"/>
<path d="M1115.7 150.0 L1115.4 151.6 L1116.1 153.9 L1115.1 155.0 L1114.2 155.4 L1113.4 155.9 L1112.9 157.8 L1112.0 159.0 L1111.1 157.6 L1110.2 157.6 L1109.3 156.7 L1108.6 155.5 L1108.7 153.2 L1107.8 151.9 L1108.5 150.0 L1109.0 148.6 L1108.6 146.8 L1108.5 144.4 L1109.2 142.9 L1109.9 141.3 L1110.9 140.3 L1112.0 140.5 L1113.1 140.1 L1114.3 140.5 L1115.2 141.9 L1115.1 145.0 L1115.3 146.8 L1115.7 148.3Z" fill="#221a14" opacity="0.7"/>
<path d="M964.0 200.2 L965.3 199.9 L966.7 201.6 L968.0 200.6 L969.7 206.0 L969.8 212.0 L967.2 218.0 L967.8 224.0 L969.4 230.0 L967.3 236.0 L967.8 242.0 L967.3 248.0 L968.2 254.0 L967.8 260.0 L968.4 266.0 L968.4 272.0 L968.1 278.0 L967.2 284.0 L967.5 290.0 L967.8 296.0 L967.1 302.0 L966.9 308.0 L967.2 314.0 L966.6 320.0 L965.1 319.0 L965.2 313.0 L964.7 307.0 L964.4 301.0 L965.2 295.0 L964.9 289.0 L964.4 283.0 L965.1 277.0 L963.9 271.0 L963.5 265.0 L963.4 259.0 L964.1 253.0 L963.5 247.0 L964.3 241.0 L964.9 235.0 L963.7 229.0 L964.5 223.0 L962.6 217.0 L964.2 211.0 L962.6 205.0Z" fill="url(#drip)" opacity="0.25"/>
<path d="M983.0 191.4 L984.3 190.2 L985.7 189.4 L987.0 189.6 L986.7 196.0 L988.0 202.0 L987.3 208.0 L986.4 214.0 L986.6 220.0 L986.8 226.0 L986.5 232.0 L986.2 238.0 L986.7 244.0 L986.8 250.0 L985.8 256.0 L986.5 262.0 L985.8 268.0 L985.9 274.0 L985.8 280.0 L984.3 279.0 L984.4 273.0 L983.5 267.0 L983.5 261.0 L983.0 255.0 L983.0 249.0 L983.6 243.0 L984.0 237.0 L983.6 231.0 L982.4 225.0 L983.1 219.0 L983.1 213.0 L982.1 207.0 L981.4 201.0 L983.5 195.0Z" fill="url(#drip)" opacity="0.25"/>
<path d="M998.0 251.7 L999.3 249.4 L1000.7 248.4 L1002.0 251.2 L1001.6 256.4 L1001.2 262.7 L1003.4 269.1 L1001.4 275.5 L1001.4 281.8 L1002.0 288.2 L1001.9 294.5 L1001.6 300.9 L1000.9 307.3 L1001.3 313.6 L1000.5 320.0 L999.2 319.0 L999.3 312.6 L998.5 306.3 L998.5 299.9 L998.1 293.5 L998.2 287.2 L998.6 280.8 L997.1 274.5 L999.0 268.1 L997.7 261.7 L998.5 255.4Z" fill="url(#drip)" opacity="0.25"/>
<path d="M972.6 404.7 L974.1 404.9 L975.7 405.3 L977.3 404.9 L978.9 412.5 L976.4 418.7 L976.9 425.0 L976.4 431.3 L977.4 437.6 L977.8 443.8 L977.0 450.1 L976.6 456.4 L977.1 462.6 L976.6 468.9 L976.5 475.2 L976.3 481.5 L975.7 487.7 L975.2 494.0 L974.2 493.0 L973.7 486.7 L973.9 480.5 L973.9 474.2 L972.8 467.9 L973.3 461.6 L973.1 455.4 L972.8 449.1 L972.2 442.8 L973.6 436.6 L973.1 430.3 L973.0 424.0 L973.1 417.7 L973.3 411.5Z" fill="url(#drip)" opacity="0.3498702379295652"/>
<path d="M979.3 417.8 L980.9 419.6 L982.6 416.6 L984.3 419.4 L984.5 424.9 L983.6 431.3 L984.2 437.7 L983.8 444.1 L984.5 450.5 L983.5 456.9 L983.4 463.3 L984.1 469.7 L983.3 476.1 L983.6 482.5 L982.7 488.9 L982.7 495.3 L982.2 501.7 L981.0 500.7 L980.8 494.3 L980.9 487.9 L980.3 481.5 L980.6 475.1 L979.6 468.7 L979.0 462.3 L980.2 455.9 L979.0 449.5 L978.8 443.1 L979.5 436.7 L980.3 430.3 L978.9 423.9Z" fill="url(#drip)" opacity="0.38051959373442185"/>
<path d="M985.4 402.1 L986.5 400.5 L987.6 401.0 L988.6 401.1 L987.8 408.2 L989.9 414.5 L988.7 420.8 L989.5 427.1 L989.5 433.3 L989.3 439.6 L988.8 445.9 L988.1 452.2 L988.9 458.4 L988.3 464.7 L988.1 471.0 L988.9 477.3 L988.9 483.5 L988.7 489.8 L988.6 496.1 L988.2 502.4 L988.2 508.6 L987.9 514.9 L987.9 521.2 L986.2 520.2 L986.0 513.9 L985.7 507.6 L985.9 501.4 L986.4 495.1 L985.9 488.8 L985.4 482.5 L985.8 476.3 L985.3 470.0 L985.7 463.7 L985.8 457.4 L985.8 451.2 L985.5 444.9 L985.0 438.6 L984.4 432.3 L984.0 426.1 L984.0 419.8 L984.6 413.5 L985.9 407.2Z" fill="url(#drip)" opacity="0.3530693791367823"/>
<path d="M991.1 402.5 L992.9 401.2 L994.6 401.1 L996.3 402.5 L996.2 406.9 L996.2 412.9 L995.6 419.0 L996.0 425.0 L997.0 431.0 L995.4 437.0 L996.3 443.1 L995.4 449.1 L996.1 455.1 L995.1 461.2 L996.1 467.2 L995.7 473.2 L996.1 479.3 L995.1 485.3 L994.9 491.3 L995.3 497.3 L994.8 503.4 L995.2 509.4 L994.8 515.4 L994.6 521.5 L993.2 520.5 L993.0 514.4 L992.4 508.4 L992.5 502.4 L992.0 496.3 L992.3 490.3 L991.9 484.3 L992.5 478.3 L991.9 472.2 L992.0 466.2 L990.8 460.2 L992.4 454.1 L991.9 448.1 L990.7 442.1 L991.5 436.0 L991.5 430.0 L990.5 424.0 L990.3 418.0 L989.6 411.9 L989.6 405.9Z" fill="url(#drip)" opacity="0.39358437176770195"/>
<path d="M973.0 429.4 L975.0 429.1 L977.0 428.8 L979.0 431.5 L978.7 436.1 L979.1 442.3 L978.3 448.4 L979.1 454.5 L978.1 460.6 L978.4 466.8 L980.0 472.9 L979.2 479.0 L979.3 485.2 L978.9 491.3 L979.0 497.4 L978.0 503.5 L977.7 509.7 L978.7 515.8 L978.0 521.9 L977.6 528.1 L978.9 534.2 L978.4 540.3 L978.5 546.5 L977.7 552.6 L977.5 558.7 L978.2 564.8 L977.4 571.0 L977.4 577.1 L978.0 583.2 L977.6 589.4 L977.6 595.5 L977.5 601.6 L976.7 607.7 L976.6 613.9 L976.5 620.0 L975.6 619.0 L975.4 612.9 L974.7 606.7 L974.8 600.6 L974.3 594.5 L974.5 588.4 L974.8 582.2 L974.3 576.1 L973.9 570.0 L973.7 563.8 L974.4 557.7 L974.0 551.6 L973.1 545.5 L973.3 539.3 L973.0 533.2 L973.5 527.1 L972.9 520.9 L973.2 514.8 L972.6 508.7 L974.3 502.5 L973.7 496.4 L972.1 490.3 L973.5 484.2 L972.0 478.0 L973.6 471.9 L973.0 465.8 L973.4 459.6 L972.5 453.5 L973.3 447.4 L972.2 441.3 L972.9 435.1Z" fill="url(#drip)" opacity="0.8"/>
<path d="M917.0 375.1 L920.3 374.6 L923.7 376.8 L927.0 377.7 L927.3 382.7 L925.8 389.3 L925.2 396.0 L924.5 402.7 L924.0 409.3 L922.5 416.0 L921.3 415.0 L920.1 408.3 L919.0 401.7 L917.8 395.0 L916.7 388.3 L917.3 381.7Z" fill="url(#drip)" opacity="0.8"/>
<path d="M929.4 392.0 L929.8 395.1 L928.7 397.3 L928.2 399.9 L927.4 401.8 L926.7 405.3 L925.2 404.6 L924.0 407.1 L922.7 405.4 L921.6 403.4 L920.4 402.4 L918.9 401.5 L918.2 398.5 L918.5 394.9 L917.4 392.0 L918.4 389.0 L918.2 385.5 L918.8 382.3 L919.5 379.0 L920.8 376.5 L922.5 376.2 L924.0 376.2 L925.6 376.1 L927.1 376.9 L927.9 380.6 L929.2 382.2 L929.8 385.4 L930.3 388.7Z" fill="#221a14" opacity="0.8"/>
<path d="M924.1 409.0 L924.8 410.8 L922.7 412.4 L919.1 413.5 L917.3 415.2 L912.8 415.5 L909.2 416.3 L905.0 417.7 L900.0 417.7 L897.0 415.6 L891.1 416.0 L890.7 413.6 L889.5 412.0 L890.0 410.4 L884.8 409.0 L886.8 407.3 L890.2 406.2 L891.7 404.7 L892.8 402.9 L897.0 402.3 L901.5 402.8 L905.0 402.2 L909.3 401.4 L914.4 401.2 L919.8 401.6 L924.5 402.8 L925.5 405.1 L924.1 407.3Z" fill="#221a14" opacity="0.7"/>
<path d="M827.5 419.3 L829.2 421.6 L830.8 420.5 L832.5 420.3 L833.8 426.4 L832.5 432.7 L832.4 439.1 L832.6 445.5 L831.6 451.8 L832.6 458.2 L832.2 464.5 L831.3 470.9 L831.5 477.3 L830.9 483.6 L830.4 490.0 L829.1 489.0 L828.8 482.6 L828.5 476.3 L828.8 469.9 L828.3 463.5 L828.7 457.2 L828.2 450.8 L827.1 444.5 L827.2 438.1 L828.2 431.7 L826.3 425.4Z" fill="url(#drip)" opacity="0.4"/>
<path d="M874.5 443.7 L876.2 443.8 L877.8 445.8 L879.5 446.9 L881.0 451.2 L880.8 457.3 L879.1 463.5 L880.5 469.6 L879.1 475.8 L878.9 481.9 L878.8 488.1 L879.5 494.2 L878.5 500.4 L878.8 506.5 L878.0 512.7 L878.2 518.8 L877.9 525.0 L876.4 524.0 L876.1 517.8 L876.0 511.7 L875.2 505.5 L875.5 499.4 L874.8 493.2 L874.2 487.1 L874.0 480.9 L874.7 474.8 L873.6 468.6 L874.1 462.5 L874.6 456.3 L873.7 450.2Z" fill="url(#drip)" opacity="0.35"/>
<path d="M902.5 471.0 L904.2 468.8 L905.8 471.1 L907.5 470.8 L907.1 476.2 L907.5 482.5 L906.4 488.8 L907.4 495.0 L906.4 501.2 L907.1 507.5 L905.8 513.8 L905.7 520.0 L904.3 519.0 L903.7 512.8 L903.8 506.5 L903.0 500.2 L903.2 494.0 L903.4 487.8 L903.2 481.5 L902.8 475.2Z" fill="url(#drip)" opacity="0.3"/>
<path d="M965.5 421.9 L967.2 421.7 L968.8 419.8 L970.5 418.5 L969.9 426.1 L970.0 432.2 L971.3 438.3 L970.9 444.3 L970.7 450.4 L969.8 456.5 L970.3 462.6 L970.0 468.7 L969.5 474.8 L970.2 480.9 L969.6 487.0 L969.8 493.0 L969.9 499.1 L969.7 505.2 L969.4 511.3 L970.0 517.4 L970.1 523.5 L969.6 529.6 L969.8 535.7 L969.6 541.7 L968.7 547.8 L969.0 553.9 L968.9 560.0 L967.3 559.0 L967.3 552.9 L967.0 546.8 L967.2 540.7 L966.7 534.7 L967.0 528.6 L966.4 522.5 L965.7 516.4 L966.2 510.3 L965.9 504.2 L965.3 498.1 L965.6 492.0 L965.2 486.0 L966.5 479.9 L966.4 473.8 L965.6 467.7 L966.4 461.6 L965.1 455.5 L965.7 449.4 L965.7 443.3 L966.4 437.3 L965.6 431.2 L964.3 425.1Z" fill="url(#drip)" opacity="0.55"/>
<path d="M937.5 480.1 L939.2 481.2 L940.8 481.1 L942.5 479.0 L944.0 486.7 L942.6 493.3 L942.7 500.0 L942.4 506.7 L941.6 513.3 L940.4 520.0 L939.4 519.0 L938.3 512.3 L937.8 505.7 L937.1 499.0 L937.0 492.3 L936.2 485.7Z" fill="url(#drip)" opacity="0.3"/>
<path d="M1235.3 490.0 L1235.7 491.3 L1235.2 492.5 L1234.6 493.7 L1233.5 494.4 L1232.3 494.8 L1231.1 494.9 L1230.0 494.3 L1228.9 494.9 L1228.1 494.0 L1226.7 494.2 L1226.2 493.0 L1225.6 492.1 L1225.0 491.1 L1225.0 490.0 L1225.2 488.9 L1224.9 487.5 L1225.5 486.4 L1226.9 486.2 L1227.7 485.3 L1228.8 484.7 L1230.0 485.1 L1231.0 485.7 L1232.1 485.7 L1232.9 486.3 L1233.7 487.0 L1234.6 487.8 L1234.3 489.0Z" fill="#221a14" opacity="0.5"/>
<path d="M978.2 634.1 L981.0 634.2 L983.7 636.8 L986.4 636.3 L987.0 640.9 L986.0 647.0 L987.0 653.0 L987.4 659.1 L987.2 665.1 L986.8 671.2 L985.3 677.2 L986.5 683.3 L985.7 689.3 L985.6 695.3 L984.4 701.4 L985.2 707.4 L984.9 713.5 L984.3 719.5 L984.0 725.6 L983.5 731.6 L982.8 737.7 L981.9 736.7 L981.3 730.6 L981.0 724.6 L980.6 718.5 L980.6 712.5 L979.9 706.4 L980.1 700.4 L979.9 694.3 L980.0 688.3 L979.0 682.3 L979.8 676.2 L978.1 670.2 L978.6 664.1 L978.3 658.1 L979.3 652.0 L978.4 646.0 L977.3 639.9Z" fill="url(#drip)" opacity="0.5111101212821778"/>
<path d="M983.4 628.2 L985.6 628.5 L987.8 626.2 L989.9 626.2 L991.0 633.9 L990.0 640.1 L990.8 646.2 L989.0 652.4 L990.3 658.5 L989.8 664.7 L989.4 670.8 L989.6 677.0 L988.2 683.1 L988.5 689.3 L988.6 695.5 L987.5 701.6 L987.1 707.8 L986.2 706.8 L985.3 700.6 L985.4 694.5 L984.3 688.3 L984.1 682.1 L984.6 676.0 L983.8 669.8 L984.4 663.7 L984.1 657.5 L983.7 651.4 L982.2 645.2 L982.9 639.1 L981.9 632.9Z" fill="url(#drip)" opacity="0.5837889204948755"/>
<path d="M990.8 623.1 L992.8 625.4 L994.7 622.6 L996.7 624.7 L996.8 630.5 L996.7 636.9 L995.9 643.3 L997.0 649.7 L995.9 656.0 L996.0 662.4 L995.7 668.8 L995.7 675.2 L995.1 681.6 L994.9 688.0 L995.1 694.3 L994.4 700.7 L993.3 699.7 L992.8 693.3 L992.1 687.0 L992.6 680.6 L991.9 674.2 L990.8 667.8 L991.6 661.4 L991.7 655.0 L989.9 648.7 L991.2 642.3 L990.3 635.9 L989.5 629.5Z" fill="url(#drip)" opacity="0.7808591554921889"/>
<path d="M995.8 631.2 L998.6 633.6 L1001.4 632.3 L1004.1 633.2 L1004.7 638.8 L1004.3 644.9 L1004.6 651.0 L1004.6 657.1 L1005.0 663.2 L1003.9 669.3 L1003.3 675.4 L1003.6 681.5 L1004.1 687.6 L1002.7 693.7 L1002.0 699.8 L1002.0 705.9 L1002.9 712.0 L1002.8 718.1 L1001.9 724.2 L1001.4 730.3 L1001.2 736.4 L1001.1 742.5 L1000.7 748.6 L999.4 747.6 L999.1 741.5 L998.9 735.4 L998.1 729.3 L997.8 723.2 L997.2 717.1 L998.2 711.0 L998.0 704.9 L996.9 698.8 L997.7 692.7 L997.3 686.6 L997.1 680.5 L996.9 674.4 L996.6 668.3 L996.2 662.2 L995.3 656.1 L995.5 650.0 L995.1 643.9 L995.7 637.8Z" fill="url(#drip)" opacity="0.6093564861999186"/>
<path d="M1001.7 637.1 L1003.9 635.7 L1006.1 634.5 L1008.2 633.4 L1007.4 641.2 L1007.4 647.3 L1009.1 653.3 L1008.2 659.4 L1007.9 665.4 L1006.7 671.5 L1007.1 677.5 L1006.6 683.6 L1006.9 689.6 L1006.1 695.7 L1005.4 701.7 L1004.7 700.7 L1003.4 694.7 L1003.0 688.6 L1003.3 682.6 L1003.4 676.5 L1002.2 670.5 L1001.9 664.4 L1001.3 658.4 L1001.7 652.3 L1002.0 646.3 L1001.2 640.2Z" fill="url(#drip)" opacity="0.614007111093809"/>
<path d="M1013.6 690.0 L1013.6 694.2 L1014.0 699.3 L1012.7 702.6 L1012.1 707.6 L1011.1 713.3 L1008.9 712.8 L1007.0 716.4 L1005.3 710.0 L1003.9 707.6 L1003.0 703.6 L1000.7 703.8 L1000.1 699.1 L1000.0 694.4 L1000.2 690.0 L999.1 685.1 L1001.0 682.1 L1000.8 676.5 L1002.8 675.4 L1003.3 668.7 L1005.1 666.9 L1007.0 667.3 L1008.5 671.7 L1009.6 675.0 L1011.2 675.4 L1013.3 676.2 L1014.7 679.9 L1015.2 684.9Z" fill="#221a14" opacity="0.85"/>
<path d="M1065.5 651.0 L1068.5 653.0 L1071.5 652.5 L1074.5 653.1 L1075.6 658.4 L1075.1 664.9 L1073.0 671.3 L1073.4 677.7 L1072.9 684.1 L1071.9 690.6 L1070.6 697.0 L1069.4 696.0 L1067.9 689.6 L1067.8 683.1 L1067.4 676.7 L1067.1 670.3 L1065.5 663.9 L1066.4 657.4Z" fill="url(#drip)" opacity="0.7"/>
<path d="M1075.9 658.0 L1076.3 659.9 L1076.2 661.9 L1074.9 663.2 L1074.0 664.7 L1072.7 665.6 L1071.5 666.9 L1070.0 665.4 L1068.9 664.7 L1067.2 665.8 L1065.7 665.1 L1064.3 664.1 L1063.7 662.0 L1062.8 660.2 L1062.9 658.0 L1064.2 656.2 L1064.3 654.3 L1064.6 652.2 L1065.5 650.4 L1067.0 649.8 L1068.4 648.7 L1070.0 648.4 L1071.3 650.5 L1072.3 651.6 L1074.0 651.3 L1075.5 652.1 L1075.6 654.4 L1075.2 656.4Z" fill="#221a14" opacity="0.8"/>
<path d="M991.5 756.1 L994.5 754.8 L997.5 757.0 L1000.5 756.4 L999.6 761.3 L1000.1 767.7 L999.4 774.0 L998.0 780.3 L998.3 786.7 L996.6 793.0 L995.3 792.0 L994.0 785.7 L993.7 779.3 L993.5 773.0 L991.4 766.7 L992.3 760.3Z" fill="url(#drip)" opacity="0.7"/>
<path d="M1076.4 815.0 L1076.0 819.6 L1072.5 822.2 L1070.9 825.1 L1071.2 831.5 L1069.1 835.9 L1065.4 836.1 L1062.0 837.6 L1059.0 833.6 L1055.3 834.8 L1051.9 833.1 L1048.4 830.5 L1047.9 824.7 L1049.4 819.1 L1047.3 815.0 L1046.1 809.8 L1047.2 804.8 L1049.2 800.4 L1051.5 796.2 L1055.0 794.3 L1059.1 797.0 L1062.0 799.7 L1064.7 798.3 L1068.5 795.8 L1070.3 800.1 L1072.9 802.6 L1073.9 806.8 L1075.8 810.5Z" fill="#221a14" opacity="0.85"/>
<path d="M1057.0 799.4 L1060.0 799.2 L1063.0 800.1 L1066.0 799.1 L1069.0 801.8 L1072.0 801.8 L1075.0 799.5 L1074.0 806.2 L1074.6 812.5 L1072.9 818.8 L1072.7 825.0 L1070.4 831.2 L1070.3 837.5 L1068.8 843.8 L1066.8 850.0 L1065.1 849.0 L1062.9 842.8 L1062.4 836.5 L1061.3 830.2 L1059.4 824.0 L1059.2 817.8 L1058.8 811.5 L1057.1 805.2Z" fill="url(#drip)" opacity="0.7"/>
<path d="M1041.0 825.7 L1043.7 823.3 L1046.3 823.4 L1049.0 826.9 L1049.0 831.2 L1047.3 837.5 L1046.7 843.8 L1045.4 850.0 L1044.5 849.0 L1042.4 842.8 L1041.7 836.5 L1040.8 830.2Z" fill="url(#drip)" opacity="0.5"/>
<path d="M1028.0 713.9 L1029.3 711.2 L1030.7 711.1 L1032.0 712.0 L1033.1 718.7 L1033.2 725.3 L1032.0 732.0 L1030.9 738.7 L1031.5 745.3 L1030.3 752.0 L1029.4 751.0 L1028.7 744.3 L1028.9 737.7 L1028.0 731.0 L1027.8 724.3 L1026.3 717.7Z" fill="url(#drip)" opacity="0.3"/>
<path d="M1093.5 619.1 L1095.2 622.0 L1096.8 618.1 L1098.5 618.2 L1099.3 626.4 L1098.9 632.7 L1097.9 639.1 L1097.7 645.5 L1098.4 651.8 L1097.5 658.2 L1097.6 664.5 L1097.2 670.9 L1097.7 677.3 L1097.3 683.6 L1096.8 690.0 L1095.4 689.0 L1094.8 682.6 L1094.6 676.3 L1094.0 669.9 L1094.9 663.5 L1093.5 657.2 L1094.4 650.8 L1093.9 644.5 L1092.6 638.1 L1094.2 631.7 L1093.5 625.4Z" fill="url(#drip)" opacity="0.35"/>
 </g>
</g>
</svg>

<!-- VIEWPORT TOOLBAR -->
<svg class="a" style="left:1480px;top:12px" width="390" height="36">
 <g fill="none" stroke="#8a8a8a" stroke-width="1.6" stroke-dasharray="2 2"><rect x="4" y="5" width="22" height="22" rx="3"/></g>
 <g fill="none" stroke="#9a9a9a" stroke-width="1.8"><path d="M8 16 Q15 8 22 16 Q15 24 8 16Z"/><path d="M8 9L22 23"/></g>
 <g fill="#e0e0e0"><rect x="65" y="9" width="5" height="14"/><rect x="74" y="9" width="5" height="14"/></g>
 <g fill="none" stroke="#bdbdbd" stroke-width="1.8"><path d="M121 6L142 10V23L121 27Z"/></g>
 <g fill="none" stroke="#aaaaaa" stroke-width="1.8"><path d="M142 29l4 4 4-4M185 29l4 4 4-4M228 29l4 4 4-4"/></g>
 <g fill="#e0e0e0"><path d="M175 5l10 5v12l-10 6-10-6V10z"/></g><g stroke="#333" stroke-width="1.6" fill="none"><path d="M165 10l10 5 10-5M175 15v13"/></g>
 <g fill="#e0e0e0"><rect x="206" y="9" width="18" height="15" rx="2"/><path d="M225 13l5-3v13l-5-3z"/></g>
 <g fill="#dcdcdc"><ellipse cx="277.5" cy="9" rx="3" ry="3.2" transform="rotate(30 277.5 9)"/><ellipse cx="281" cy="15.5" rx="3.2" ry="3.6"/><ellipse cx="277.5" cy="21" rx="3.6" ry="3.2" transform="rotate(40 277.5 21)"/><ellipse cx="271.5" cy="23" rx="3" ry="3.4" transform="rotate(70 271.5 23)"/><ellipse cx="266" cy="20" rx="2.8" ry="2.4" transform="rotate(30 266 20)"/></g>
 <rect x="300" y="-5" width="43" height="41" fill="#434343"/>
 <path d="M318 21L331 7" stroke="#e6e6e6" stroke-width="2.2" stroke-linecap="round"/><path d="M312 28q0-6 5-8.5l3 3q-2.5 5-8 5.5z" fill="#e6e6e6"/>
 <g fill="#e0e0e0"><path d="M358 11h5l2-3h8l2 3h5v16h-22z"/></g><circle cx="369" cy="19" r="4" fill="#333"/><circle cx="369" cy="19" r="2" fill="#e0e0e0"/>
</svg>
<div class="a" style="left:1641px;top:65px;width:218px;height:33px;background:#222222;border:1px solid #3d3d3d;border-radius:3px"></div>
<div class="t lbl" style="left:1650px;top:75px">Material</div>
<svg class="a" style="left:1838px;top:77px" width="14" height="10"><path d="M1 2l6 6 6-6" stroke="#cfcfcf" stroke-width="1.8" fill="none"/></svg>
<!-- cursor -->
<svg class="a" style="left:1584px;top:562px" width="18" height="26"><path d="M2 1V20L7 15L11 23L14 22L10 14H17Z" fill="#f0f0f0" stroke="#222" stroke-width="1"/></svg>
<!-- axis gizmo -->
<svg class="a" style="left:1810px;top:815px" width="50" height="50">
 <path d="M14 10V36" stroke="#7cc47c" stroke-width="2.5"/><path d="M14 36L34 32" stroke="#c0603a" stroke-width="2"/><path d="M14 36L26 42" stroke="#8f8fe0" stroke-width="2.5"/>
 <text x="11" y="8" font-size="8" fill="#7cc47c" font-family="Liberation Sans">Y</text><text x="42" y="38" font-size="8" fill="#b04040" font-family="Liberation Sans">X</text>
</svg>
<!-- LEFT TOOLBAR -->
<svg class="a" style="left:0px;top:50px" width="35" height="480">
 <g fill="#5a5a5a" stroke="none">
  <path d="M9 24L23 10" stroke="#5a5a5a" stroke-width="2.4" stroke-linecap="round"/><path d="M3 31q0-6 5-8.5l3 3q-2.5 5-8 5.5z"/>
  <path d="M4 67l11-11 8 8-11 11z" fill="none" stroke="#5a5a5a" stroke-width="2"/><path d="M11 60l4-4 8 8-4 4z"/>
  <path d="M4 117q1-9 8-13l7 7q-4 7-13 8z"/><path d="M13 102l4-4 6 6-4 4z"/>
  <path d="M13 138l8 5v10l-8 5-8-5v-10z" fill="none" stroke="#5a5a5a" stroke-width="1.8"/><circle cx="13" cy="148" r="4"/>
  <rect x="6" y="181" width="14" height="15" fill="none" stroke="#5a5a5a" stroke-width="1.8"/><path d="M7 182l12 13" stroke="#5a5a5a" stroke-width="1.2"/><path d="M9 196l4 4 3-5z"/>
  <path d="M5 241l6-8" stroke="#5a5a5a" stroke-width="2.2"/><circle cx="15" cy="229" r="7"/>
  <circle cx="13" cy="270" r="5"/><rect x="11" y="274" width="4" height="5"/><rect x="4" y="279" width="18" height="5" rx="1"/>
  <path d="M4 329l9-11" stroke="#5a5a5a" stroke-width="2" fill="none"/><path d="M13 316l5-5a3 3 0 0 1 5 5l-5 5z"/><circle cx="5" cy="313" r="2"/>
 </g>
 <path d="M3 351h29" stroke="#2c2c2c" stroke-width="2"/>
 <g fill="#d8d8d8">
  <path d="M3 377q2-6 9-7q7 0 10 5v4q-4 3-9 2l-10 -1z"/><path d="M14 379h7v6h-7z"/><circle cx="17" cy="377" r="2.5"/>
 </g>
 <g fill="#5a5a5a"><path d="M6 413h14v2l-6 7 6 7v2h-14v-2l6-7-6-7z"/></g>
 <g fill="#dcdcdc"><path d="M4 452h12l5 5v17h-17z"/></g><circle cx="12.5" cy="464" r="5" fill="none" stroke="#444" stroke-width="2"/>
</svg>


<!-- ASSETS -->
<div class="a" style="left:37px;top:906px;width:1833px;height:13px;background:#333333"></div>
<div class="a" style="left:37px;top:919px;width:1833px;height:2px;background:#2a2a2a"></div>
<div class="a" style="left:37px;top:921px;width:1833px;height:45px;background:#2c2c2c"></div>
<div class="t hdr" style="left:46px;top:938px">ASSETS</div>
<div class="a" style="left:1804px;top:937px;width:12px;height:12px;border:2px solid #cfcfcf;border-radius:2px"></div>
<div class="a" style="left:1804px;top:944px;width:5px;height:5px;background:#cfcfcf"></div>
<svg class="a" style="left:1843px;top:936px" width="14" height="14"><path d="M1 1L13 13M13 1L1 13" stroke="#d0d0d0" stroke-width="2"/></svg>
<div class="a" style="left:37px;top:966px;width:1833px;height:56px;background:#303030"></div>
<svg class="a" style="left:59px;top:984px" width="10" height="13"><path d="M2 1l5 5.5-5 5.5" stroke="#bdbdbd" stroke-width="1.6" fill="none"/></svg>
<div class="t hdr" style="left:82px;top:983px;font-weight:bold;color:#d8d8d8">All libraries</div>
<svg class="a" style="left:514px;top:979px" width="22" height="22"><circle cx="9" cy="9" r="6.5" stroke="#d8d8d8" stroke-width="2.4" fill="none"/><path d="M14 14l6 6" stroke="#d8d8d8" stroke-width="2.8"/></svg>
<div class="a" style="left:543px;top:974px;width:116px;height:26px;border:2px solid #555;border-radius:4px;background:#2c2c2c"></div>
<div class="t lbl" style="left:550px;top:981px;color:#c8c8c8">generator</div>
<svg class="a" style="left:642px;top:982px" width="12" height="12"><path d="M1 1L11 11M11 1L1 11" stroke="#d0d0d0" stroke-width="1.8"/></svg>
<div class="t lbl" style="left:670px;top:983px;color:#777">Search</div>
<div class="a" style="left:508px;top:1006px;width:912px;height:1px;background:#454545"></div>
<svg class="a" style="left:1425px;top:975px" width="440" height="30">
 <g fill="#7a7a7a">
  <circle cx="17" cy="15" r="11"/>
  <circle cx="57" cy="15" r="11"/>
  <rect x="86" y="4" width="22" height="21"/>
  <circle cx="137" cy="15" r="11"/>
  <path d="M166 26l3-5 15-15 2 2-15 15z"/>
  <circle cx="217" cy="15" r="11"/>
  <path d="M246 4h22v22h-22z"/>
  <path d="M286 26v-10l6 4 6-7 5 5 6-3v11z"/><circle cx="300" cy="6" r="2.5"/>
  <path d="M326 4h22v4h-2l-1-2h-6v18h3v2h-10v-2h3v-18h-6l-1 2h-2z"/>
 </g>
 <g fill="#303030"><circle cx="13" cy="11" r="3"/><path d="M47 8q10 4 18 16l-3 2q-8 -10 -17 -14z"/><circle cx="97" cy="15" r="4"/><path d="M128 22l17-14 1 2-17 14z"/>
 <path d="M247 9h20M247 14h20M247 19h20M251 5v20M256 5v20M261 5v20" stroke="#303030" stroke-width="1.2"/></g>
 <g stroke="#303030" stroke-width="1.2"><path d="M208 8l18 18M212 5l16 16M206 13l14 14M226 8l-18 18M222 5l-16 16M228 13l-14 14"/></g>
 <g fill="#ececec"><rect x="404" y="5" width="6" height="6"/><rect x="412" y="5" width="6" height="6"/><rect x="420" y="5" width="6" height="6"/><rect x="404" y="13" width="6" height="6"/><rect x="412" y="13" width="6" height="6"/><rect x="420" y="13" width="6" height="6"/><rect x="404" y="21" width="6" height="6"/><rect x="412" y="21" width="6" height="6"/><rect x="420" y="21" width="6" height="6"/></g>
</svg>
<div class="a" style="left:45px;top:1022px;width:1817px;height:153px;background:#262626"></div>

<svg class="a" style="left:0;top:0" width="1870" height="1175">
<defs>
<radialGradient id="sg1" cx="0.3" cy="0.3" r="0.85"><stop offset="0" stop-color="#d0d0d0"/><stop offset="0.5" stop-color="#9a9a9a"/><stop offset="1" stop-color="#555"/></radialGradient>
<radialGradient id="sg2" cx="0.3" cy="0.3" r="0.85"><stop offset="0" stop-color="#f4f4f4"/><stop offset="0.5" stop-color="#c4c4c4"/><stop offset="1" stop-color="#777"/></radialGradient>
<radialGradient id="sg2w" cx="0.25" cy="0.35" r="0.85"><stop offset="0" stop-color="#ffffff"/><stop offset="0.5" stop-color="#dcdcdc"/><stop offset="1" stop-color="#8a8a8a"/></radialGradient>
<radialGradient id="sg3" cx="0.3" cy="0.3" r="0.85"><stop offset="0" stop-color="#9a9a9a"/><stop offset="0.5" stop-color="#555"/><stop offset="1" stop-color="#2a2a2a"/></radialGradient>
<radialGradient id="sg4" cx="0.25" cy="0.4" r="0.85"><stop offset="0" stop-color="#d8d8d8"/><stop offset="0.5" stop-color="#9a9a9a"/><stop offset="1" stop-color="#606060"/></radialGradient>
<linearGradient id="sgr" x1="0" y1="0" x2="1" y2="0"><stop offset="0" stop-color="#e0503a"/><stop offset="0.42" stop-color="#d84a36"/><stop offset="0.55" stop-color="#a0a0a0"/><stop offset="1" stop-color="#8a8a8a"/></linearGradient>
<radialGradient id="sgc" cx="0.35" cy="0.35" r="0.8"><stop offset="0" stop-color="#a8eaf8"/><stop offset="0.6" stop-color="#60c4dc"/><stop offset="1" stop-color="#3a90a8"/></radialGradient>
<linearGradient id="sgg" x1="0" y1="0" x2="0.3" y2="1"><stop offset="0" stop-color="#30d020"/><stop offset="0.5" stop-color="#88dd20"/><stop offset="1" stop-color="#c8d020"/></linearGradient>
<linearGradient id="sgp" x1="0" y1="0" x2="1" y2="0.2"><stop offset="0" stop-color="#70e0a0"/><stop offset="0.25" stop-color="#f0f0b0"/><stop offset="0.45" stop-color="#e8e8a0"/><stop offset="0.55" stop-color="#6050c8"/><stop offset="1" stop-color="#8a80e0"/></linearGradient>
<pattern id="chk" width="16" height="16" patternUnits="userSpaceOnUse" patternTransform="rotate(35)"><rect width="16" height="16" fill="#f4f4f4"/><rect width="8" height="8" fill="#8a8a8a"/><rect x="8" y="8" width="8" height="8" fill="#8a8a8a"/></pattern>
<pattern id="uvp" width="10" height="10" patternUnits="userSpaceOnUse" patternTransform="rotate(20)"><rect width="10" height="10" fill="#5ec0d8"/><circle cx="5" cy="5" r="2.5" fill="#a8e8f4"/></pattern>
<filter id="noise" x="0" y="0" width="100%" height="100%"><feTurbulence type="fractalNoise" baseFrequency="0.18" numOctaves="3" seed="2"/><feColorMatrix type="matrix" values="0 0 0 0 0  0 0 0 0 0  0 0 0 0 0  0 0 0 -2.2 1.3"/><feComposite in2="SourceGraphic" operator="in"/></filter>
<clipPath id="sph"><circle cx="0" cy="0" r="37"/></clipPath>
<symbol id="ring" viewBox="-40 -40 80 80" overflow="visible"><g clip-path="url(#sph)"><g fill="none" transform="rotate(-40 12 -10)">
 <ellipse cx="12" cy="-10" rx="24" ry="33" stroke="#000" stroke-opacity="0.55" stroke-width="2.6"/>
 <ellipse cx="12" cy="-10" rx="27.5" ry="37" stroke="#fff" stroke-opacity="0.45" stroke-width="2"/>
 <ellipse cx="12" cy="-10" rx="32" ry="42" stroke="#000" stroke-opacity="0.45" stroke-width="2.6"/>
 <ellipse cx="12" cy="-10" rx="35.5" ry="46" stroke="#fff" stroke-opacity="0.35" stroke-width="2"/>
</g></g><circle cx="0" cy="0" r="36.5" fill="none" stroke="#fff" stroke-opacity="0.15" stroke-width="1.5"/></symbol>
</defs>
<circle cx="89" cy="1070" r="37" fill="url(#sg1)"/><use href="#ring" x="49" y="1030" width="80" height="80"/>
<circle cx="179" cy="1070" r="37" fill="url(#sg2)"/><use href="#ring" x="139" y="1030" width="80" height="80"/>
<circle cx="270" cy="1070" r="37" fill="url(#sg2w)"/><use href="#ring" x="230" y="1030" width="80" height="80"/>
<circle cx="361" cy="1070" r="32" fill="none" stroke="#e4e4e4" stroke-width="5" stroke-dasharray="12.5 8.6" transform="rotate(-8 361 1070)"/>
<circle cx="451" cy="1070" r="37" fill="url(#sg4)"/><use href="#ring" x="411" y="1030" width="80" height="80"/>
<rect x="498" y="1022" width="89" height="104" fill="#0c0c0c" stroke="#4470a8" stroke-width="2"/>
<path d="M542 1034 L575 1052 V1092 L542 1108 L509 1092 V1052Z" fill="#2a2a2a" filter="url(#noise)" opacity="0.9"/>
<circle cx="633" cy="1070" r="37" fill="url(#sg3)"/><circle cx="625" cy="1080" r="26" fill="#aaa" filter="url(#noise)" opacity="0.4"/><use href="#ring" x="593" y="1030" width="80" height="80"/>
<circle cx="723" cy="1070" r="37" fill="url(#sg1)"/><circle cx="723" cy="1070" r="37" fill="#333" filter="url(#noise)" opacity="0.8"/><use href="#ring" x="683" y="1030" width="80" height="80"/>
<circle cx="814" cy="1070" r="37" fill="url(#sg3)"/><use href="#ring" x="774" y="1030" width="80" height="80"/>
<circle cx="904" cy="1070" r="37" fill="url(#sgr)"/><use href="#ring" x="864" y="1030" width="80" height="80"/>
<circle cx="995" cy="1070" r="37" fill="url(#sg2)"/><use href="#ring" x="955" y="1030" width="80" height="80"/>
<circle cx="1086" cy="1070" r="37" fill="url(#sg1)"/><use href="#ring" x="1046" y="1030" width="80" height="80"/>
<g transform="translate(1176,1070)"><g fill="#f0f0f0"><path d="M-20 -20L22 22" stroke="#f0f0f0" stroke-width="7" stroke-linecap="round"/><circle cx="-21" cy="-21" r="11"/></g><circle cx="-27" cy="-27" r="6" fill="#262626"/><path d="M-24 -30l6 6" stroke="#262626" stroke-width="5"/>
<g transform="rotate(-45)"><path d="M-22 -6h46a6 6 0 0 1 0 12h-46z" fill="#f0f0f0" stroke="#262626" stroke-width="2"/><path d="M-23 -6l-14 6 14 6z" fill="#f0f0f0"/><path d="M-8 -3h22M-8 3h22" stroke="#262626" stroke-width="1.6"/><path d="M16 -6v12" stroke="#262626" stroke-width="2"/></g></g>
<g transform="translate(1267,1070)"><rect x="-21" y="-24" width="56" height="55" fill="#f0f0f0"/><circle cx="4" cy="4" r="23" fill="#262626"/><path d="M-18 -20L8 8" stroke="#262626" stroke-width="11" stroke-linecap="round"/><path d="M-18 -20L8 8" stroke="#f0f0f0" stroke-width="6.5" stroke-linecap="round"/><circle cx="-21" cy="-23" r="12" fill="#262626"/><circle cx="-21" cy="-23" r="9.5" fill="#f0f0f0"/><circle cx="-26" cy="-28" r="5.5" fill="#262626"/><path d="M-23 -31l6 6" stroke="#262626" stroke-width="4.5"/></g>
<circle cx="1358" cy="1070" r="37" fill="url(#sg3)"/><use href="#ring" x="1318" y="1030" width="80" height="80"/>
<circle cx="1448" cy="1070" r="37" fill="url(#sg1)"/><use href="#ring" x="1408" y="1030" width="80" height="80"/>
<circle cx="1539" cy="1070" r="37" fill="url(#chk)"/><circle cx="1539" cy="1070" r="37" fill="url(#sg1)" opacity="0.35"/><use href="#ring" x="1499" y="1030" width="80" height="80"/>
<g transform="translate(1629,1070)"><rect x="-40" y="-38" width="80" height="78" fill="#3a3a3a"/><rect x="-40" y="-38" width="80" height="2" fill="#ccc"/><rect x="-40" y="-33" width="80" height="12" fill="#000"/><rect x="-40" y="-18" width="80" height="3" fill="#bbb"/><rect x="-40" y="-12" width="80" height="3" fill="#999"/><circle cx="-14" cy="14" r="24" fill="#000" stroke="#999" stroke-width="2"/><circle cx="26" cy="0" r="13" fill="#000" stroke="#999" stroke-width="2"/></g>
<circle cx="1720" cy="1070" r="37" fill="url(#uvp)"/><circle cx="1720" cy="1070" r="37" fill="url(#sgc)" opacity="0.55"/><use href="#ring" x="1680" y="1030" width="80" height="80"/>
<circle cx="89" cy="1172" r="37" fill="url(#sgp)"/><use href="#ring" x="49" y="1132" width="80" height="80"/>
<circle cx="179" cy="1172" r="37" fill="url(#sgg)"/><use href="#ring" x="139" y="1132" width="80" height="80"/>
<circle cx="270" cy="1172" r="37" fill="url(#sg1)"/><use href="#ring" x="230" y="1132" width="80" height="80"/>
</svg>
<div class="t" style="left:29px;width:120px;text-align:center;top:1113px;font-size:13px;color:#c4c4c4">3D Distance</div><div class="t" style="left:119px;width:120px;text-align:center;top:1113px;font-size:13px;color:#c4c4c4">3D Linear ...</div><div class="t" style="left:210px;width:120px;text-align:center;top:1113px;font-size:13px;color:#c4c4c4">Ambient ...</div><div class="t" style="left:301px;width:120px;text-align:center;top:1113px;font-size:13px;color:#c4c4c4">Auto Stitc...</div><div class="t" style="left:391px;width:120px;text-align:center;top:1113px;font-size:13px;color:#c4c4c4">Curvature</div><div class="t" style="left:482px;width:120px;text-align:center;top:1113px;font-size:13px;color:#c4c4c4">Custom Dirt</div><div class="t" style="left:573px;width:120px;text-align:center;top:1113px;font-size:13px;color:#c4c4c4">Dirt</div><div class="t" style="left:663px;width:120px;text-align:center;top:1113px;font-size:13px;color:#c4c4c4">Dripping ...</div><div class="t" style="left:754px;width:120px;text-align:center;top:1113px;font-size:13px;color:#c4c4c4">Fiber Glass...</div><div class="t" style="left:844px;width:120px;text-align:center;top:1113px;font-size:13px;color:#c4c4c4">Grayscale ...</div><div class="t" style="left:935px;width:120px;text-align:center;top:1113px;font-size:13px;color:#c4c4c4">Inflate Shri...</div><div class="t" style="left:1026px;width:120px;text-align:center;top:1113px;font-size:13px;color:#c4c4c4">Light</div><div class="t" style="left:1116px;width:120px;text-align:center;top:1113px;font-size:13px;color:#c4c4c4">Mask Buil...</div><div class="t" style="left:1207px;width:120px;text-align:center;top:1113px;font-size:13px;color:#c4c4c4">Mask Editor</div><div class="t" style="left:1298px;width:120px;text-align:center;top:1113px;font-size:13px;color:#c4c4c4">Metal Edg...</div><div class="t" style="left:1388px;width:120px;text-align:center;top:1113px;font-size:13px;color:#c4c4c4">Position</div><div class="t" style="left:1479px;width:120px;text-align:center;top:1113px;font-size:13px;color:#c4c4c4">Tri-Planar ...</div><div class="t" style="left:1569px;width:120px;text-align:center;top:1113px;font-size:13px;color:#c4c4c4">UV Border...</div><div class="t" style="left:1660px;width:120px;text-align:center;top:1113px;font-size:13px;color:#c4c4c4">UV Checker</div>

<!-- RIGHT PANEL -->
<div class="a" style="left:1875px;top:4px;width:617px;height:40px;background:#2b2b2b"></div>
<div class="t hdr" style="left:1885px;top:20px">TEXTURE SET LIST</div>
<div class="a" style="left:1875px;top:88px;width:617px;height:35px;background:#262626;border-top:3px solid #45698f;border-bottom:3px solid #45698f;border-left:2px solid #45698f"></div>
<div class="t lbl" style="left:1907px;top:100px;color:#dedede;font-weight:bold;font-size:14.5px;letter-spacing:0">DefaultMaterial</div>
<div class="t lbl" style="left:2292px;top:99px;font-size:14px;letter-spacing:0">2048x2048</div>
<div class="t lbl" style="left:2398px;top:99px">Main shader</div>

<div class="a" style="left:1876px;top:165px;width:103px;height:4px;background:#4a78b0"></div>
<div class="a" style="left:1980px;top:166px;width:179px;height:36px;background:#2a2a2a"></div>
<div class="t hdr" style="left:1886px;top:180px">LAYERS</div>
<div class="t hdr" style="left:1990px;top:180px">TEXTURE SET SETTINGS</div>
<div class="a" style="left:1883px;top:210px;width:110px;height:33px;background:#2a2a2a;border:1px solid #3a3a3a"></div>
<div class="t lbl" style="left:1890px;top:221px">Base color</div>
<div class="a" style="left:1875px;top:255px;width:617px;height:2px;background:#2a2a2a"></div>
<div class="a" style="left:2232px;top:208px;width:39px;height:37px;background:#3a3a3a"></div>

<div class="a" style="left:1913px;top:306px;width:31px;height:8px;background:#e8832b"></div>
<div class="t lbl" style="left:1954px;top:282px">Base</div>
<div class="t lbl" style="left:2441px;top:268px">Norm</div>
<div class="t lbl" style="left:2449px;top:297px;font-size:14px;letter-spacing:0">100</div>
<div class="a" style="left:1909px;top:318px;width:583px;height:36px;background:#222326;border-top:3px solid #45698f;border-bottom:3px solid #45698f;border-left:2px solid #45698f"></div>
<div class="t lbl" style="left:1975px;top:330px">Stylization</div>
<div class="t lbl" style="left:2373px;top:330px">Repl</div>
<div class="t lbl" style="left:2429px;top:330px;font-size:14px;letter-spacing:0">100</div>
<div class="t lbl" style="left:1975px;top:366px">MatFx Rust Weathering</div>
<div class="t lbl" style="left:2373px;top:366px">Repl</div>
<div class="t lbl" style="left:2429px;top:366px;font-size:14px;letter-spacing:0">100</div>
<div class="a" style="left:1875px;top:390px;width:617px;height:2px;background:#2a2a2a"></div>


<div class="a" style="left:2435px;top:19px;width:12px;height:12px;border:2px solid #cfcfcf;border-radius:2px"></div>
<div class="a" style="left:2435px;top:26px;width:5px;height:5px;background:#cfcfcf"></div>
<svg class="a" style="left:2472px;top:19px" width="14" height="14"><path d="M1 1L13 13M13 1L1 13" stroke="#d0d0d0" stroke-width="2"/></svg>
<svg class="a" style="left:1882px;top:55px" width="70" height="24"><g fill="none" stroke="#5c5c5c" stroke-width="1.8"><path d="M2 11 Q12 2 22 11 Q12 20 2 11Z"/><circle cx="11" cy="11" r="3"/><path d="M13 17a5 5 0 1 0 8-4"/><path d="M44 11 Q55 2 66 11 Q55 20 44 11Z"/><path d="M55 7v8M53 8.5l2-1.5"/></g></svg>
<svg class="a" style="left:2467px;top:57px" width="20" height="20"><g fill="#d0d0d0"><rect x="1" y="2" width="17" height="2.5"/><rect x="1" y="7" width="17" height="2.5"/><rect x="1" y="12" width="5" height="2.5"/></g><path d="M10 13l4 4 4-4" stroke="#d0d0d0" stroke-width="2" fill="none"/></svg>
<svg class="a" style="left:1882px;top:98px" width="18" height="14"><path d="M1 7 Q9 -1 17 7 Q9 15 1 7Z" fill="none" stroke="#cfcfcf" stroke-width="1.8"/><circle cx="9" cy="7" r="2.6" fill="#cfcfcf"/></svg>
<svg class="a" style="left:1951px;top:181px" width="14" height="13"><path d="M1 1L13 12M13 1L1 12" stroke="#bdbdbd" stroke-width="1.8"/></svg>
<svg class="a" style="left:1974px;top:221px" width="14" height="10"><path d="M1 2l6 6 6-6" stroke="#cfcfcf" stroke-width="1.8" fill="none"/></svg>


<!-- layer toolbar icons -->
<svg class="a" style="left:2230px;top:205px" width="262" height="45">
 <rect x="5" y="4" width="36" height="34" rx="3" fill="#383838"/>
 <g stroke="#d6d6d6" fill="none" stroke-linecap="round">
  <path d="M13 32L30 15" stroke-width="3"/><path d="M27 8l2 5M33 10l-4 3M24 12l4 1M31 16l-1-3" stroke-width="1.6"/><path d="M25 25l4 4 4-4" stroke-width="2.2"/>
 </g>
 <rect x="49" y="10" width="22" height="22" fill="#d6d6d6"/><circle cx="59" cy="21" r="7.5" fill="#333"/><path d="M61 24l4 4 4-4" stroke="#d6d6d6" stroke-width="2.2" fill="none"/>
 <path d="M89 30L107 12" stroke="#d6d6d6" stroke-width="2.6" stroke-linecap="round"/><path d="M86 33q0-6 5-8l2 2q-1 5-7 6z" fill="#d6d6d6"/>
 <g fill="#d6d6d6"><path d="M124 23l9-9 10 10-9 9z"/><circle cx="144" cy="31" r="2.5"/><path d="M131 11l3-3 3 3-3 3z"/></g><path d="M127 22l7-6 6 6z" fill="#333"/>
 <g fill="#d6d6d6"><path d="M170 9A11.5 11.5 0 0 0 170 32A13 13 0 0 1 170 9Z"/><circle cx="176" cy="20" r="8.5"/></g><path d="M175 23l3.5 3.5 3.5-3.5" stroke="#333" stroke-width="2.2" fill="none"/>
 <path d="M199 13h9l3 3h11v14h-23z" fill="#d6d6d6"/>
 <g fill="#d6d6d6"><rect x="236" y="12" width="21" height="3"/><rect x="243" y="9" width="7" height="3"/><path d="M238 17h17l-1.5 16h-14z"/></g><g stroke="#333" stroke-width="1.3"><path d="M243 19v12M246.5 19v12M250 19v12"/></g>
</svg>
<!-- base layer -->
<svg class="a" style="left:1882px;top:276px" width="22" height="16"><path d="M1 8 Q11 -2 21 8 Q11 18 1 8Z" fill="none" stroke="#c8c8c8" stroke-width="1.8"/><circle cx="11" cy="8" r="3.5" fill="none" stroke="#c8c8c8" stroke-width="1.6"/></svg>
<div class="a" style="left:1911px;top:265px;width:35px;height:35px;background:#2c2c2c;border:1px solid #383838"></div>
<div class="a" style="left:1915px;top:269px;width:28px;height:28px;border-radius:50%;background:radial-gradient(circle at 28% 38%,#f4f4f4 0%,#9a9a9a 40%,#3e3e3e 80%,#6a6a6a 100%)"></div>
<div class="a" style="left:2401px;top:273px;width:30px;height:30px;border:1px dashed #555"></div>
<svg class="a" style="left:2480px;top:270px" width="12" height="40"><path d="M2 3l3 3 3-3M2 32l3 3 3-3" stroke="#bbb" stroke-width="1.3" fill="none"/></svg>
<!-- stylization -->
<svg class="a" style="left:1914px;top:329px" width="50" height="60"><g fill="none" stroke="#c8c8c8" stroke-width="1.8"><path d="M2 8 Q11 -1 20 8 Q11 17 2 8Z"/><circle cx="11" cy="8" r="3.5"/><path d="M2 44 Q11 35 20 44 Q11 53 2 44Z"/><circle cx="11" cy="44" r="3.5"/></g>
 <g fill="#d4d4d4"><path d="M40 -1l8 4.5v9l-8 4.5-8-4.5v-9z"/><path d="M40 35l8 4.5v9l-8 4.5-8-4.5v-9z"/></g>
 <g fill="none" stroke="#2a2a2a" stroke-width="2.2"><path d="M44 4.5 Q40 2.5 37 4.5 Q35 7 40 8 Q45 9 43 11.5 Q40 13.5 36 11.5"/><path d="M44 40.5 Q40 38.5 37 40.5 Q35 43 40 44 Q45 45 43 47.5 Q40 49.5 36 47.5"/></g></svg>
<svg class="a" style="left:2408px;top:332px" width="84" height="48"><g stroke="#aaa" stroke-width="1.3" fill="none"><path d="M2 4l3 3 3-3M53 4l3 3 3-3M2 40l3 3 3-3M53 40l3 3 3-3"/></g><g stroke="#bbb" stroke-width="1.5"><path d="M71 1l8 8M79 1l-8 8M71 37l8 8M79 37l-8 8"/></g></svg>

<!-- PROPERTIES -->
<div class="a" style="left:1875px;top:506px;width:617px;height:47px;background:#2b2b2b"></div>
<div class="t hdr" style="left:1885px;top:526px">PROPERTIES - FILTER</div>


<div class="a" style="left:2435px;top:527px;width:12px;height:12px;border:2px solid #cfcfcf;border-radius:2px"></div>
<div class="a" style="left:2435px;top:534px;width:5px;height:5px;background:#cfcfcf"></div>
<svg class="a" style="left:2472px;top:526px" width="14" height="14"><path d="M1 1L13 13M13 1L1 13" stroke="#d0d0d0" stroke-width="2"/></svg>
<div class="t lbl" style="left:1926px;top:561px">Strokes Select</div>
<div class="a" style="left:2093px;top:553px;width:381px;height:31px;background:#2b2b2b;border:1px solid #3a3a3a;border-top:none"></div>
<div class="t lbl" style="left:2102px;top:562px">Smudges</div>
<svg class="a" style="left:2452px;top:563px" width="14" height="10"><path d="M1 2l6 6 6-6" stroke="#cfcfcf" stroke-width="1.8" fill="none"/></svg>
<div class="t lbl" style="left:1926px;top:601px">Strokes Scale</div>
<div class="t val" style="left:2451px;top:601px">0.3</div>
<div class="trk" style="left:1926px;top:630px;width:548px"></div>
<div class="fil" style="left:1926px;top:629px;width:162px"></div>
<div class="knob" style="left:2086px;top:623px"></div>
<div class="t lbl" style="left:1926px;top:659px">Non-Uniform Size</div>
<div class="a" style="left:2093px;top:653px;width:381px;height:25px;background:#2a2a2a;border:1px solid #383838;border-radius:2px"></div>
<div class="t lbl" style="left:2266px;top:659px;font-size:14px;letter-spacing:0">False</div>
<div class="t lbl" style="left:1926px;top:696px">Strokes Scale Random</div>
<div class="t val" style="left:2450px;top:696px">0.5</div>
<div class="trk" style="left:1926px;top:725px;width:548px"></div>
<div class="fil" style="left:1926px;top:724px;width:269px"></div>
<div class="knob" style="left:2193px;top:718px"></div>
<div class="t lbl" style="left:1926px;top:753px">Strokes Follow Surface</div>
<div class="a" style="left:2093px;top:747px;width:381px;height:27px;background:#3c3c3c;border:2px solid #5c5c5c;border-radius:3px"></div>
<div class="t lbl" style="left:2270px;top:754px;font-size:14px;letter-spacing:0">True</div>
<div class="t lbl" style="left:1926px;top:791px">Strokes Rotation</div>
<div class="a" style="left:2104px;top:797px;width:59px;height:59px;border-radius:50%;border:3px solid #d0d0d0;background:radial-gradient(circle at 50% 50%,#d0d0d0 0%,#8a8a8a 45%,#3a3a3a 100%)"></div><svg class="a" style="left:2100px;top:793px" width="67" height="67"><g fill="#d0d0d0"><path d="M33.5 0l3 4h-6z"/><path d="M33.5 67l3-4h-6z"/><path d="M67 33.5l-4 3v-6z"/></g><circle cx="5" cy="33.5" r="3.5" fill="none" stroke="#cfcfcf" stroke-width="1.5"/></svg>
<div class="a" style="left:2106px;top:825px;width:27px;height:2px;background:#d8d8d8"></div>
<div class="t lbl" style="left:2093px;top:820px;font-size:12px;color:#777">0</div>
<svg class="a" style="left:2093px;top:795px" width="12" height="16"><path d="M2 14L10 2" stroke="#666" stroke-width="1.3"/></svg>
<div class="trk" style="left:2199px;top:839px;width:275px"></div>
<div class="knob" style="left:2183px;top:832px"></div>
<div class="t val" style="left:2460px;top:811px">0</div>
<div class="t lbl" style="left:1926px;top:884px">Strokes Rotation Random</div>
<div class="t val" style="left:2450px;top:884px">0.5</div>
<div class="trk" style="left:1926px;top:912px;width:548px"></div>
<div class="fil" style="left:1926px;top:911px;width:269px"></div>
<div class="knob" style="left:2193px;top:905px"></div>
<div class="t lbl" style="left:1926px;top:939px">Projection Hardness</div>
<div class="t val" style="left:2442px;top:939px">0.71</div>
<div class="trk" style="left:1926px;top:967px;width:548px"></div>
<div class="fil" style="left:1926px;top:966px;width:379px"></div>
<div class="knob" style="left:2303px;top:960px"></div>
<div class="t lbl" style="left:1926px;top:994px">Normal Threshold</div>
<div class="t val" style="left:2450px;top:994px">0.9</div>
<div class="trk" style="left:1926px;top:1022px;width:548px"></div>
<div class="fil" style="left:1926px;top:1021px;width:480px"></div>
<div class="knob" style="left:2404px;top:1015px"></div>

<svg class="a" style="left:1909px;top:1057px" width="10" height="94"><g stroke="#c8c8c8" stroke-width="1.6" fill="none"><path d="M2 1l5 6-5 6M2 41l5 6-5 6M2 81l5 6-5 6"/></g></svg>
<div class="t hdr" style="left:1928px;top:1058px;font-size:14px;letter-spacing:0">Brush Strokes Effects</div>
<div class="t hdr" style="left:1928px;top:1098px;font-size:14px">Smoothness</div>
<div class="t hdr" style="left:1928px;top:1138px;font-size:14px">Colorize</div>
<div class="a" style="left:2484px;top:883px;width:8px;height:292px;background:#3c3c3c"></div>
<div class="a" style="left:2484px;top:553px;width:8px;height:330px;background:#2c2c2c"></div>

<svg class="a" style="left:2476px;top:1118px" width="16" height="45"><path d="M16 6 Q6 10 5 20 Q8 28 16 30Z" fill="#e8682a"/><path d="M16 12 Q11 16 10 20 Q12 24 16 25Z" fill="#2a3a40"/><path d="M5 30 Q10 36 16 38" stroke="#2aa39a" stroke-width="3" fill="none"/></svg>
</div></body></html>
